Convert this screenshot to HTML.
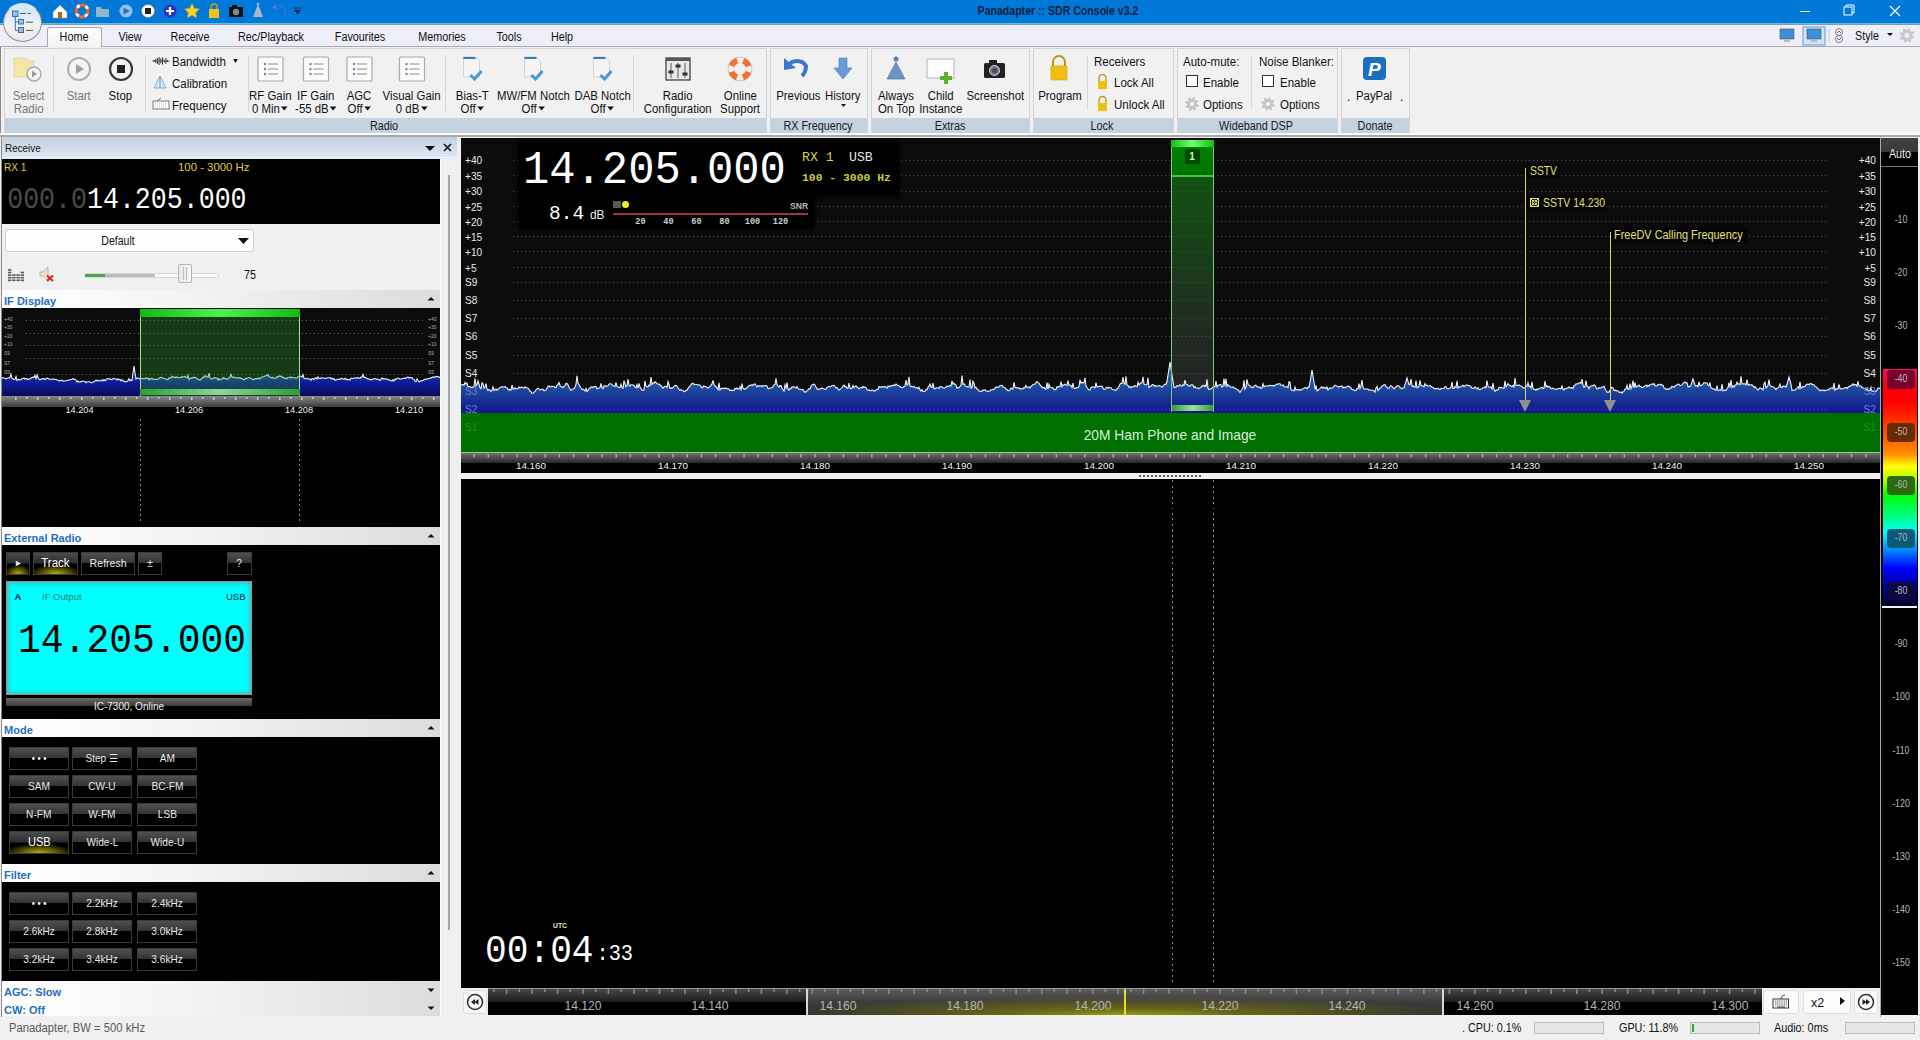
<!DOCTYPE html><html><head><meta charset="utf-8"><title>SDR Console</title><style>
*{margin:0;padding:0;box-sizing:border-box}
html,body{width:1920px;height:1040px;overflow:hidden;background:#f0f0f0;font-family:"Liberation Sans",sans-serif;font-size:12px;color:#000}
.a{position:absolute}
.t{position:absolute;white-space:nowrap;line-height:1}
.m{font-family:"Liberation Mono",monospace}
.hdr{position:absolute;left:2px;width:438px;height:18px;background:linear-gradient(90deg,#ffffff 0%,#f4f4f4 40%,#dcdcdc 100%)}
.hdr b{position:absolute;left:2px;top:5.5px;font-size:11.5px;color:#1f6fc0;white-space:nowrap;line-height:1;transform:scaleX(.96);transform-origin:left}
.btn{position:absolute;height:23px;border:1px solid #3a3a3a;background:linear-gradient(#505050 0%,#333 48%,#000 50%,#000 100%);color:#e8e8e8;font-size:11.5px;text-align:center;line-height:21px;white-space:nowrap}
.btn span{display:inline-block;transform:scaleX(.92)}
.rl{position:absolute;white-space:nowrap;line-height:1;font-size:11.5px;color:#101010;text-align:center}
</style></head><body>
<div class="a" style="left:0px;top:0px;width:1920px;height:23px;background:#0078d7"></div>
<div class="a" style="left:0px;top:23px;width:1920px;height:1px;background:#4cc8f4"></div>
<div class="t" style="left:908.0px;top:5px;width:300px;text-align:center;font-size:12px;font-weight:bold;color:#0b1c44;transform:scaleX(.88)">Panadapter :: SDR Console v3.2</div>
<svg class="a" style="left:1796px;top:0px;" width="124" height="23" viewBox="0 0 124 23"><line x1="4" y1="11.5" x2="14" y2="11.5" stroke="#fff" stroke-width="1"/><rect x="48" y="7" width="8" height="8" fill="none" stroke="#fff"/><path d="M50 7V5h8v8h-2" fill="none" stroke="#fff"/><path d="M94 6L104 16M104 6L94 16" stroke="#fff" stroke-width="1.2"/></svg>
<svg class="a" style="left:0px;top:0px;" width="310" height="23" viewBox="0 0 310 23"><path d="M53 12L60 5L67 12V18H53Z" fill="#fff" stroke="#999" stroke-width=".6"/><rect x="58" y="12" width="4" height="6" fill="#b8601c"/><circle cx="82" cy="11" r="6" fill="none" stroke="#f26a2a" stroke-width="3"/><circle cx="82" cy="11" r="6" fill="none" stroke="#fff" stroke-width="3" stroke-dasharray="3 6.42" stroke-dashoffset="-3.2"/><path d="M96 7h5l1 2h7v8H96Z" fill="#8cb8c8"/><circle cx="126" cy="11" r="6.5" fill="#90c0ea"/><path d="M123.5 7.5L130 11L123.5 14.5Z" fill="#2a6fb8"/><circle cx="148" cy="11" r="6.5" fill="#fff" stroke="#888" stroke-width=".6"/><rect x="145" y="8" width="6" height="6" fill="#222"/><circle cx="170" cy="11" r="6.5" fill="#3030c0"/><path d="M170 7v8M166 11h8" stroke="#fff" stroke-width="2.2"/><path d="M192 3.5l2.3 4.8 5.2.7-3.8 3.6.9 5.2-4.6-2.5-4.6 2.5.9-5.2-3.8-3.6 5.2-.7Z" fill="#f8d030" stroke="#d8a010" stroke-width=".5"/><path d="M211 9V7a3 3 0 0 1 6 0v2" fill="none" stroke="#c8a000" stroke-width="1.5"/><rect x="209" y="9" width="10" height="9" fill="#f0c020"/><rect x="229" y="7" width="14" height="10" fill="#111"/><circle cx="236" cy="12" r="3.2" fill="#888"/><rect x="232" y="5" width="5" height="2" fill="#111"/><path d="M258 4L263 17H253Z" fill="#a8b8cc"/><circle cx="258" cy="4" r="1.5" fill="#9ab"/><path d="M274 9a6 6 0 0 1 11 1v6" fill="none" stroke="#6a6af0" stroke-width="1.3" stroke-dasharray="1.5 1"/><path d="M272 8l3 -3l2 4z" fill="#6a6af0"/><path d="M294 8h7" stroke="#10204a" stroke-width="1"/><path d="M294 10h7l-3.5 4z" fill="#10204a"/></svg>
<div class="a" style="left:0px;top:24px;width:1920px;height:23px;background:#eeeef8"></div>
<div class="a" style="left:0px;top:24px;width:1920px;height:1px;background:#8e96a4"></div>
<div class="a" style="left:0px;top:45.5px;width:1920px;height:1.5px;background:#a9abb3"></div>
<div class="a" style="left:3px;top:3px;width:39px;height:39px;border-radius:50%;background:linear-gradient(rgba(236,248,255,.88) 0%,rgba(240,248,252,.95) 48%,#f2f1ee 52%,#ecebe8 100%);border:1px solid rgba(110,110,110,.75);border-top-color:rgba(200,220,240,.4)"></div>
<svg class="a" style="left:0px;top:0px;" width="44" height="44" viewBox="0 0 44 44"><rect x="12.5" y="11" width="5.5" height="5.5" fill="#9cbde0" stroke="#3d6ea8" stroke-width="1"/><rect x="18.5" y="19.5" width="5" height="4.5" fill="#9cbde0" stroke="#3d6ea8" stroke-width="1"/><rect x="18.5" y="27.5" width="5" height="5" fill="#9cbde0" stroke="#3d6ea8" stroke-width="1"/><path d="M15.3 16.5V30.4H18.5M15.3 22H18.5" fill="none" stroke="#3d6ea8" stroke-width="1"/><path d="M20 13.4h6M27.5 13.4h3.5M26 22.2h7M26 30.4h7" stroke="#555" stroke-width="1"/></svg>
<div class="a" style="left:47px;top:27px;width:55px;height:20px;background:linear-gradient(#fdfdfd,#f2f2f2);border:1px solid #a8a8b0;border-bottom:none;border-radius:3px 3px 0 0"></div>
<div class="t" style="left:14.0px;top:31px;width:120px;text-align:center;font-size:12px;color:#101010;transform:scaleX(.9)">Home</div>
<div class="t" style="left:70.0px;top:31px;width:120px;text-align:center;font-size:12px;color:#101010;transform:scaleX(.9)">View</div>
<div class="t" style="left:129.5px;top:31px;width:120px;text-align:center;font-size:12px;color:#101010;transform:scaleX(.9)">Receive</div>
<div class="t" style="left:210.5px;top:31px;width:120px;text-align:center;font-size:12px;color:#101010;transform:scaleX(.9)">Rec/Playback</div>
<div class="t" style="left:300.0px;top:31px;width:120px;text-align:center;font-size:12px;color:#101010;transform:scaleX(.9)">Favourites</div>
<div class="t" style="left:381.5px;top:31px;width:120px;text-align:center;font-size:12px;color:#101010;transform:scaleX(.9)">Memories</div>
<div class="t" style="left:449.0px;top:31px;width:120px;text-align:center;font-size:12px;color:#101010;transform:scaleX(.9)">Tools</div>
<div class="t" style="left:502.0px;top:31px;width:120px;text-align:center;font-size:12px;color:#101010;transform:scaleX(.9)">Help</div>
<svg class="a" style="left:1776px;top:26px;" width="144" height="20" viewBox="0 0 144 20"><rect x="4" y="3" width="14" height="10" fill="#3d8fd8" stroke="#555" stroke-width=".6"/><rect x="8" y="14" width="6" height="2" fill="#bbb"/><rect x="27" y="1" width="22" height="18" fill="#cfe4f8" stroke="#5b9bd5"/><rect x="31" y="3" width="14" height="10" fill="#3d8fd8" stroke="#555" stroke-width=".6"/><rect x="35" y="14" width="6" height="2" fill="#bbb"/><line x1="53" y1="3" x2="53" y2="17" stroke="#ccc"/><circle cx="63" cy="6" r="3.5" fill="none" stroke="#666" stroke-width=".8"/><circle cx="63" cy="13" r="3.5" fill="none" stroke="#666" stroke-width=".8"/><path d="M61 7l2-2l2 2M61 12l2 2l2-2" fill="none" stroke="#444" stroke-width=".8"/><path d="M111 7h6l-3 3z" fill="#111"/><path d="M136.50 9.50 L138.36 10.96 L137.93 12.37 L135.57 12.56 L134.89 13.39 L135.17 15.74 L133.87 16.43 L132.07 14.89 L131.00 15.00 L129.54 16.86 L128.13 16.43 L127.94 14.07 L127.11 13.39 L124.76 13.67 L124.07 12.37 L125.61 10.57 L125.50 9.50 L123.64 8.04 L124.07 6.63 L126.43 6.44 L127.11 5.61 L126.83 3.26 L128.13 2.57 L129.93 4.11 L131.00 4.00 L132.46 2.14 L133.87 2.57 L134.06 4.93 L134.89 5.61 L137.24 5.33 L137.93 6.63 L136.39 8.43Z" fill="#c8c8c8"/><circle cx="131" cy="9.5" r="2.5" fill="#eeeef8"/></svg>
<div class="t" style="left:1855px;top:30px;font-size:12px;color:#111;transform:scaleX(.9);transform-origin:left">Style</div>
<div class="a" style="left:0px;top:47px;width:1920px;height:90px;background:#f0f0f0"></div>
<div class="a" style="left:0px;top:47px;width:4px;height:90px;background:#f0f0f0;border-left:1px solid #8a8a8a"></div>
<div class="a" style="left:4px;top:48px;width:763px;height:86px;border:1px solid #d4d4d4;background:#f1f1f1"></div>
<div class="a" style="left:5px;top:118px;width:761px;height:15px;background:#c5d2df"></div>
<div class="t" style="left:304.0px;top:120px;width:160px;text-align:center;font-size:12px;color:#1a1a1a;transform:scaleX(.9)">Radio</div>
<div class="a" style="left:770px;top:48px;width:98px;height:86px;border:1px solid #d4d4d4;background:#f1f1f1"></div>
<div class="a" style="left:771px;top:118px;width:96px;height:15px;background:#c5d2df"></div>
<div class="t" style="left:738.0px;top:120px;width:160px;text-align:center;font-size:12px;color:#1a1a1a;transform:scaleX(.9)">RX Frequency</div>
<div class="a" style="left:871px;top:48px;width:159px;height:86px;border:1px solid #d4d4d4;background:#f1f1f1"></div>
<div class="a" style="left:872px;top:118px;width:157px;height:15px;background:#c5d2df"></div>
<div class="t" style="left:870.0px;top:120px;width:160px;text-align:center;font-size:12px;color:#1a1a1a;transform:scaleX(.9)">Extras</div>
<div class="a" style="left:1033px;top:48px;width:141px;height:86px;border:1px solid #d4d4d4;background:#f1f1f1"></div>
<div class="a" style="left:1034px;top:118px;width:139px;height:15px;background:#c5d2df"></div>
<div class="t" style="left:1022.0px;top:120px;width:160px;text-align:center;font-size:12px;color:#1a1a1a;transform:scaleX(.9)">Lock</div>
<div class="a" style="left:1177px;top:48px;width:161px;height:86px;border:1px solid #d4d4d4;background:#f1f1f1"></div>
<div class="a" style="left:1178px;top:118px;width:159px;height:15px;background:#c5d2df"></div>
<div class="t" style="left:1176.0px;top:120px;width:160px;text-align:center;font-size:12px;color:#1a1a1a;transform:scaleX(.9)">Wideband DSP</div>
<div class="a" style="left:1341px;top:48px;width:69px;height:86px;border:1px solid #d4d4d4;background:#f1f1f1"></div>
<div class="a" style="left:1342px;top:118px;width:67px;height:15px;background:#c5d2df"></div>
<div class="t" style="left:1295.0px;top:120px;width:160px;text-align:center;font-size:12px;color:#1a1a1a;transform:scaleX(.9)">Donate</div>
<div class="a" style="left:0px;top:133px;width:1920px;height:2px;background:#fafafa"></div>
<div class="a" style="left:0px;top:135px;width:1920px;height:1.5px;background:#a8a8a8"></div>
<div class="a" style="left:0px;top:136.5px;width:1920px;height:1px;background:#f8f8f8"></div>
<div class="a" style="left:53px;top:55px;width:1px;height:57px;background:#d6d6d6"></div>
<div class="a" style="left:145px;top:55px;width:1px;height:57px;background:#d6d6d6"></div>
<div class="a" style="left:248px;top:55px;width:1px;height:57px;background:#d6d6d6"></div>
<div class="a" style="left:445px;top:55px;width:1px;height:57px;background:#d6d6d6"></div>
<div class="a" style="left:633px;top:55px;width:1px;height:57px;background:#d6d6d6"></div>
<div class="a" style="left:1087px;top:56px;width:1px;height:54px;background:#d8d8d8"></div>
<div class="a" style="left:1251px;top:56px;width:1px;height:54px;background:#d8d8d8"></div>
<div class="t" style="left:-31px;top:90px;width:120px;text-align:center;font-size:12px;color:#777"><span style="display:inline-block;transform:scaleX(.95)">Select</span></div>
<div class="t" style="left:-31px;top:103px;width:120px;text-align:center;font-size:12px;color:#777"><span style="display:inline-block;transform:scaleX(.95)">Radio</span></div>
<div class="t" style="left:19px;top:90px;width:120px;text-align:center;font-size:12px;color:#777"><span style="display:inline-block;transform:scaleX(.95)">Start</span></div>
<div class="t" style="left:60px;top:90px;width:120px;text-align:center;font-size:12px;color:#111"><span style="display:inline-block;transform:scaleX(.95)">Stop</span></div>
<div class="t" style="left:210.5px;top:90px;width:120px;text-align:center;font-size:12px;color:#111"><span style="display:inline-block;transform:scaleX(.95)">RF Gain</span></div>
<div class="t" style="left:210.5px;top:103px;width:120px;text-align:center;font-size:12px;color:#111"><span style="display:inline-block;transform:scaleX(.95)">0 Min<svg width="8" height="5" style="margin-left:1px;vertical-align:2px"><path d="M0.5 0.5h7l-3.5 4z" fill="#111"/></svg></span></div>
<div class="t" style="left:256px;top:90px;width:120px;text-align:center;font-size:12px;color:#111"><span style="display:inline-block;transform:scaleX(.95)">IF Gain</span></div>
<div class="t" style="left:256px;top:103px;width:120px;text-align:center;font-size:12px;color:#111"><span style="display:inline-block;transform:scaleX(.95)">-55 dB<svg width="8" height="5" style="margin-left:1px;vertical-align:2px"><path d="M0.5 0.5h7l-3.5 4z" fill="#111"/></svg></span></div>
<div class="t" style="left:299.5px;top:90px;width:120px;text-align:center;font-size:12px;color:#111"><span style="display:inline-block;transform:scaleX(.95)">AGC</span></div>
<div class="t" style="left:299.5px;top:103px;width:120px;text-align:center;font-size:12px;color:#111"><span style="display:inline-block;transform:scaleX(.95)">Off<svg width="8" height="5" style="margin-left:1px;vertical-align:2px"><path d="M0.5 0.5h7l-3.5 4z" fill="#111"/></svg></span></div>
<div class="t" style="left:352px;top:90px;width:120px;text-align:center;font-size:12px;color:#111"><span style="display:inline-block;transform:scaleX(.95)">Visual Gain</span></div>
<div class="t" style="left:352px;top:103px;width:120px;text-align:center;font-size:12px;color:#111"><span style="display:inline-block;transform:scaleX(.95)">0 dB<svg width="8" height="5" style="margin-left:1px;vertical-align:2px"><path d="M0.5 0.5h7l-3.5 4z" fill="#111"/></svg></span></div>
<div class="t" style="left:412.5px;top:90px;width:120px;text-align:center;font-size:12px;color:#111"><span style="display:inline-block;transform:scaleX(.95)">Bias-T</span></div>
<div class="t" style="left:412.5px;top:103px;width:120px;text-align:center;font-size:12px;color:#111"><span style="display:inline-block;transform:scaleX(.95)">Off<svg width="8" height="5" style="margin-left:1px;vertical-align:2px"><path d="M0.5 0.5h7l-3.5 4z" fill="#111"/></svg></span></div>
<div class="t" style="left:473.5px;top:90px;width:120px;text-align:center;font-size:12px;color:#111"><span style="display:inline-block;transform:scaleX(.95)">MW/FM Notch</span></div>
<div class="t" style="left:473.5px;top:103px;width:120px;text-align:center;font-size:12px;color:#111"><span style="display:inline-block;transform:scaleX(.95)">Off<svg width="8" height="5" style="margin-left:1px;vertical-align:2px"><path d="M0.5 0.5h7l-3.5 4z" fill="#111"/></svg></span></div>
<div class="t" style="left:542.5px;top:90px;width:120px;text-align:center;font-size:12px;color:#111"><span style="display:inline-block;transform:scaleX(.95)">DAB Notch</span></div>
<div class="t" style="left:542.5px;top:103px;width:120px;text-align:center;font-size:12px;color:#111"><span style="display:inline-block;transform:scaleX(.95)">Off<svg width="8" height="5" style="margin-left:1px;vertical-align:2px"><path d="M0.5 0.5h7l-3.5 4z" fill="#111"/></svg></span></div>
<div class="t" style="left:618px;top:90px;width:120px;text-align:center;font-size:12px;color:#111"><span style="display:inline-block;transform:scaleX(.95)">Radio</span></div>
<div class="t" style="left:618px;top:103px;width:120px;text-align:center;font-size:12px;color:#111"><span style="display:inline-block;transform:scaleX(.95)">Configuration</span></div>
<div class="t" style="left:680px;top:90px;width:120px;text-align:center;font-size:12px;color:#111"><span style="display:inline-block;transform:scaleX(.95)">Online</span></div>
<div class="t" style="left:680px;top:103px;width:120px;text-align:center;font-size:12px;color:#111"><span style="display:inline-block;transform:scaleX(.95)">Support</span></div>
<div class="t" style="left:738px;top:90px;width:120px;text-align:center;font-size:12px;color:#111"><span style="display:inline-block;transform:scaleX(.95)">Previous</span></div>
<div class="t" style="left:783px;top:90px;width:120px;text-align:center;font-size:12px;color:#111"><span style="display:inline-block;transform:scaleX(.95)">History</span></div>
<div class="t" style="left:836px;top:90px;width:120px;text-align:center;font-size:12px;color:#111"><span style="display:inline-block;transform:scaleX(.95)">Always</span></div>
<div class="t" style="left:836px;top:103px;width:120px;text-align:center;font-size:12px;color:#111"><span style="display:inline-block;transform:scaleX(.95)">On Top</span></div>
<div class="t" style="left:881px;top:90px;width:120px;text-align:center;font-size:12px;color:#111"><span style="display:inline-block;transform:scaleX(.95)">Child</span></div>
<div class="t" style="left:881px;top:103px;width:120px;text-align:center;font-size:12px;color:#111"><span style="display:inline-block;transform:scaleX(.95)">Instance</span></div>
<div class="t" style="left:935px;top:90px;width:120px;text-align:center;font-size:12px;color:#111"><span style="display:inline-block;transform:scaleX(.95)">Screenshot</span></div>
<div class="t" style="left:1000px;top:90px;width:120px;text-align:center;font-size:12px;color:#111"><span style="display:inline-block;transform:scaleX(.95)">Program</span></div>
<div class="t" style="left:1314.5px;top:90px;width:120px;text-align:center;font-size:12px;color:#111"><span style="display:inline-block;transform:scaleX(.95)">PayPal</span></div>
<div class="t" style="left:1347px;top:91px;font-size:12px">.</div>
<div class="t" style="left:1400px;top:91px;font-size:12px">.</div>
<div class="t" style="left:172px;top:56px;font-size:12px;color:#111"><span style="display:inline-block;transform:scaleX(.96);transform-origin:left">Bandwidth</span></div>
<div class="t" style="left:232px;top:57px;font-size:7px">▼</div>
<div class="t" style="left:172px;top:78px;font-size:12px;color:#111"><span style="display:inline-block;transform:scaleX(.96);transform-origin:left">Calibration</span></div>
<div class="t" style="left:172px;top:100px;font-size:12px;color:#111"><span style="display:inline-block;transform:scaleX(.96);transform-origin:left">Frequency</span></div>
<div class="t" style="left:1094px;top:56px;font-size:12px;color:#111"><span style="display:inline-block;transform:scaleX(.96);transform-origin:left">Receivers</span></div>
<div class="t" style="left:1114px;top:77px;font-size:12px;color:#111"><span style="display:inline-block;transform:scaleX(.96);transform-origin:left">Lock All</span></div>
<div class="t" style="left:1114px;top:99px;font-size:12px;color:#111"><span style="display:inline-block;transform:scaleX(.96);transform-origin:left">Unlock All</span></div>
<div class="t" style="left:1183px;top:56px;font-size:12px;color:#111"><span style="display:inline-block;transform:scaleX(.96);transform-origin:left">Auto-mute:</span></div>
<div class="t" style="left:1203px;top:77px;font-size:12px;color:#111"><span style="display:inline-block;transform:scaleX(.96);transform-origin:left">Enable</span></div>
<div class="t" style="left:1203px;top:99px;font-size:12px;color:#111"><span style="display:inline-block;transform:scaleX(.96);transform-origin:left">Options</span></div>
<div class="t" style="left:1259px;top:56px;font-size:12px;color:#111"><span style="display:inline-block;transform:scaleX(.96);transform-origin:left">Noise Blanker:</span></div>
<div class="t" style="left:1280px;top:77px;font-size:12px;color:#111"><span style="display:inline-block;transform:scaleX(.96);transform-origin:left">Enable</span></div>
<div class="t" style="left:1280px;top:99px;font-size:12px;color:#111"><span style="display:inline-block;transform:scaleX(.96);transform-origin:left">Options</span></div>
<div class="a" style="left:1186px;top:75px;width:12px;height:12px;background:#fff;border:1px solid #333"></div>
<div class="a" style="left:1262px;top:75px;width:12px;height:12px;background:#fff;border:1px solid #333"></div>
<svg class="a" style="left:0px;top:0px;" width="1420" height="137" viewBox="0 0 1420 137"><path d="M14 58h12l2 3h6v16H14Z" fill="#f4e6a8" stroke="#d8c888" stroke-width=".6"/><circle cx="34" cy="74" r="7" fill="#f4f4f4" stroke="#aaa" stroke-width="1.5"/><path d="M32 70.5L37 74L32 77.5Z" fill="#999"/><circle cx="79" cy="69" r="11" fill="#f4f4f4" stroke="#b0b0b0" stroke-width="2"/><path d="M76 64L84 69L76 74Z" fill="#a0a0a0"/><circle cx="121" cy="69" r="11" fill="#f4f4f4" stroke="#3a3a3a" stroke-width="2.2"/><rect x="117" y="65" width="8" height="8" fill="#222"/><line x1="154.0" y1="60.0" x2="154.0" y2="62.0" stroke="#333" stroke-width="1"/><line x1="155.7" y1="59.0" x2="155.7" y2="63.0" stroke="#333" stroke-width="1"/><line x1="157.4" y1="58.0" x2="157.4" y2="64.0" stroke="#333" stroke-width="1"/><line x1="159.1" y1="57.0" x2="159.1" y2="65.0" stroke="#333" stroke-width="1"/><line x1="160.8" y1="58.5" x2="160.8" y2="63.5" stroke="#333" stroke-width="1"/><line x1="162.5" y1="57.5" x2="162.5" y2="64.5" stroke="#333" stroke-width="1"/><line x1="164.2" y1="59.5" x2="164.2" y2="62.5" stroke="#333" stroke-width="1"/><line x1="165.9" y1="58.0" x2="165.9" y2="64.0" stroke="#333" stroke-width="1"/><line x1="167.6" y1="60.0" x2="167.6" y2="62.0" stroke="#333" stroke-width="1"/><line x1="152" y1="61" x2="170" y2="61" stroke="#333" stroke-width=".6"/><path d="M154 88L160 76L166 88Z" fill="#d8ecf8" stroke="#6a9ac8" stroke-width=".8"/><line x1="160" y1="76" x2="160" y2="88" stroke="#6a9ac8"/><rect x="153" y="101" width="16" height="8" fill="#fff" stroke="#555" stroke-width=".8"/><path d="M155 103h12M155 105h12M155 107h12" stroke="#888" stroke-width=".6" stroke-dasharray="1 1"/><path d="M157 101l4-3" stroke="#555" stroke-width=".8"/><rect x="258.0" y="57" width="25" height="24" fill="#fbfbfb" stroke="#a8a8a8" stroke-width="1.2" rx="1"/><circle cx="265.0" cy="64" r="1.2" fill="#6a8ab0"/><line x1="268.0" y1="64" x2="278.0" y2="64" stroke="#8a8a8a" stroke-width="1"/><circle cx="265.0" cy="69" r="1.2" fill="#6a8ab0"/><line x1="268.0" y1="69" x2="278.0" y2="69" stroke="#8a8a8a" stroke-width="1"/><circle cx="265.0" cy="74" r="1.2" fill="#6a8ab0"/><line x1="268.0" y1="74" x2="278.0" y2="74" stroke="#8a8a8a" stroke-width="1"/><rect x="303.5" y="57" width="25" height="24" fill="#fbfbfb" stroke="#a8a8a8" stroke-width="1.2" rx="1"/><circle cx="310.5" cy="64" r="1.2" fill="#6a8ab0"/><line x1="313.5" y1="64" x2="323.5" y2="64" stroke="#8a8a8a" stroke-width="1"/><circle cx="310.5" cy="69" r="1.2" fill="#6a8ab0"/><line x1="313.5" y1="69" x2="323.5" y2="69" stroke="#8a8a8a" stroke-width="1"/><circle cx="310.5" cy="74" r="1.2" fill="#6a8ab0"/><line x1="313.5" y1="74" x2="323.5" y2="74" stroke="#8a8a8a" stroke-width="1"/><rect x="347.0" y="57" width="25" height="24" fill="#fbfbfb" stroke="#a8a8a8" stroke-width="1.2" rx="1"/><circle cx="354.0" cy="64" r="1.2" fill="#6a8ab0"/><line x1="357.0" y1="64" x2="367.0" y2="64" stroke="#8a8a8a" stroke-width="1"/><circle cx="354.0" cy="69" r="1.2" fill="#6a8ab0"/><line x1="357.0" y1="69" x2="367.0" y2="69" stroke="#8a8a8a" stroke-width="1"/><circle cx="354.0" cy="74" r="1.2" fill="#6a8ab0"/><line x1="357.0" y1="74" x2="367.0" y2="74" stroke="#8a8a8a" stroke-width="1"/><rect x="399.5" y="57" width="25" height="24" fill="#fbfbfb" stroke="#a8a8a8" stroke-width="1.2" rx="1"/><circle cx="406.5" cy="64" r="1.2" fill="#6a8ab0"/><line x1="409.5" y1="64" x2="419.5" y2="64" stroke="#8a8a8a" stroke-width="1"/><circle cx="406.5" cy="69" r="1.2" fill="#6a8ab0"/><line x1="409.5" y1="69" x2="419.5" y2="69" stroke="#8a8a8a" stroke-width="1"/><circle cx="406.5" cy="74" r="1.2" fill="#6a8ab0"/><line x1="409.5" y1="74" x2="419.5" y2="74" stroke="#8a8a8a" stroke-width="1"/><path d="M463.5 57h12l4 4v16H463.5Z" fill="#f4f4f4" stroke="#c8c8c8" stroke-width=".8"/><rect x="463.5" y="57" width="12" height="2" fill="#3a7ac0"/><path d="M470.5 75l4 4l7-8" fill="none" stroke="#4a9ad8" stroke-width="3"/><path d="M524.5 57h12l4 4v16H524.5Z" fill="#f4f4f4" stroke="#c8c8c8" stroke-width=".8"/><rect x="524.5" y="57" width="12" height="2" fill="#3a7ac0"/><path d="M531.5 75l4 4l7-8" fill="none" stroke="#4a9ad8" stroke-width="3"/><path d="M593.5 57h12l4 4v16H593.5Z" fill="#f4f4f4" stroke="#c8c8c8" stroke-width=".8"/><rect x="593.5" y="57" width="12" height="2" fill="#3a7ac0"/><path d="M600.5 75l4 4l7-8" fill="none" stroke="#4a9ad8" stroke-width="3"/><rect x="666" y="58" width="24" height="22" fill="#e8e8e8" stroke="#333" stroke-width="1.2"/><rect x="666" y="58" width="24" height="3" fill="#555"/><line x1="671" y1="63" x2="671" y2="78" stroke="#333" stroke-width=".8"/><rect x="668.5" y="70.5" width="5" height="3" fill="#333"/><line x1="678" y1="63" x2="678" y2="78" stroke="#333" stroke-width=".8"/><rect x="675.5" y="64.5" width="5" height="3" fill="#333"/><line x1="685" y1="63" x2="685" y2="78" stroke="#333" stroke-width=".8"/><rect x="682.5" y="72.5" width="5" height="3" fill="#333"/><circle cx="740" cy="69" r="9" fill="none" stroke="#f07030" stroke-width="6"/><circle cx="740" cy="69" r="9" fill="none" stroke="#f0f0f0" stroke-width="6" stroke-dasharray="6.1 8" stroke-dashoffset="3"/><circle cx="740" cy="69" r="12" fill="none" stroke="#bbb" stroke-width=".6"/><path d="M788 66a10 9 0 0 1 18 0c0 5 -2 8 -4 10" fill="none" stroke="#3a78d0" stroke-width="4"/><path d="M784 58L784 70L796 68Z" fill="#3a78d0"/><path d="M839 58h8v10h5L843 79L834 68h5Z" fill="#6a9ad8" stroke="#4a7ab8" stroke-width=".6"/><path d="M841 104h5l-2.5 3z" fill="#111"/><circle cx="896" cy="59" r="2.5" fill="#5a80b0"/><path d="M896 62L905 79H887Z" fill="#6c94c4" stroke="#4a6a98" stroke-width=".6"/><rect x="927" y="59" width="27" height="19" fill="#fdfdfd" stroke="#c8c8c8" stroke-width="1.4"/><path d="M946 72v12M940 78h12" stroke="#5ab030" stroke-width="4"/><rect x="984" y="63" width="21" height="15" fill="#222" rx="1.5"/><rect x="989" y="60" width="8" height="4" fill="#222"/><circle cx="994.5" cy="70.5" r="5" fill="#777" stroke="#ddd" stroke-width="1"/><circle cx="994.5" cy="70.5" r="2.5" fill="#446"/><path d="M1053 66v-4a6 6 0 0 1 12 0v4" fill="none" stroke="#b89818" stroke-width="2"/><rect x="1051" y="66" width="16" height="14" fill="#f0c010" stroke="#d0a008" stroke-width=".6"/><path d="M1099 81v-3a3.5 3.5 0 0 1 7 0v3" fill="none" stroke="#b89818" stroke-width="1.4"/><rect x="1098" y="81" width="9" height="8" fill="#f0c010"/><path d="M1099 103v-3a3.5 3.5 0 0 1 7 0v3" fill="none" stroke="#b89818" stroke-width="1.4"/><rect x="1098" y="103" width="9" height="8" fill="#f0c010"/><path d="M1197.00 104.00 L1198.87 105.37 L1198.47 106.68 L1196.16 106.78 L1195.54 107.54 L1195.89 109.82 L1194.68 110.47 L1192.98 108.90 L1192.00 109.00 L1190.63 110.87 L1189.32 110.47 L1189.22 108.16 L1188.46 107.54 L1186.18 107.89 L1185.53 106.68 L1187.10 104.98 L1187.00 104.00 L1185.13 102.63 L1185.53 101.32 L1187.84 101.22 L1188.46 100.46 L1188.11 98.18 L1189.32 97.53 L1191.02 99.10 L1192.00 99.00 L1193.37 97.13 L1194.68 97.53 L1194.78 99.84 L1195.54 100.46 L1197.82 100.11 L1198.47 101.32 L1196.90 103.02Z" fill="#c4c4c4"/><circle cx="1192" cy="104" r="2.3" fill="#f0f0f0"/><path d="M1273.00 104.00 L1274.87 105.37 L1274.47 106.68 L1272.16 106.78 L1271.54 107.54 L1271.89 109.82 L1270.68 110.47 L1268.98 108.90 L1268.00 109.00 L1266.63 110.87 L1265.32 110.47 L1265.22 108.16 L1264.46 107.54 L1262.18 107.89 L1261.53 106.68 L1263.10 104.98 L1263.00 104.00 L1261.13 102.63 L1261.53 101.32 L1263.84 101.22 L1264.46 100.46 L1264.11 98.18 L1265.32 97.53 L1267.02 99.10 L1268.00 99.00 L1269.37 97.13 L1270.68 97.53 L1270.78 99.84 L1271.54 100.46 L1273.82 100.11 L1274.47 101.32 L1272.90 103.02Z" fill="#c4c4c4"/><circle cx="1268" cy="104" r="2.3" fill="#f0f0f0"/><rect x="1363" y="57" width="23" height="23" rx="4" fill="#1a6fc0"/><text x="1368" y="76" font-family="Liberation Sans" font-weight="bold" font-style="italic" font-size="19" fill="#fff">P</text></svg>
<div class="a" style="left:0px;top:1016px;width:1920px;height:24px;background:#f0f0f0;border-top:1px solid #d8d8d8"></div>
<div class="t" style="left:9px;top:1022px;font-size:12.5px;color:#5a5a5a"><span style="display:inline-block;transform:scaleX(.9);transform-origin:left">Panadapter, BW = 500 kHz</span></div>
<div class="t" style="left:1462px;top:1022px;font-size:12px;color:#111"><span style="display:inline-block;transform:scaleX(.9);transform-origin:left">. CPU: 0.1%</span></div>
<div class="a" style="left:1534px;top:1022px;width:70px;height:12px;background:#e6e6e6;border:1px solid #bcbcbc"></div>
<div class="t" style="left:1619px;top:1022px;font-size:12px;color:#111"><span style="display:inline-block;transform:scaleX(.9);transform-origin:left">GPU: 11.8%</span></div>
<div class="a" style="left:1690px;top:1022px;width:70px;height:12px;background:#e6e6e6;border:1px solid #bcbcbc"></div>
<div class="a" style="left:1692px;top:1024px;width:2px;height:8px;background:#22b030"></div>
<div class="t" style="left:1774px;top:1022px;font-size:12px;color:#111"><span style="display:inline-block;transform:scaleX(.9);transform-origin:left">Audio: 0ms</span></div>
<div class="a" style="left:1845px;top:1022px;width:70px;height:12px;background:#e6e6e6;border:1px solid #bcbcbc"></div>
<div class="a" style="left:0px;top:137px;width:461px;height:880px;background:#f0f0f0"></div>
<div class="a" style="left:1px;top:137px;width:1px;height:880px;background:#8c8c8c"></div>
<div class="a" style="left:440px;top:137px;width:1px;height:880px;background:#fafafa"></div>
<div class="a" style="left:448px;top:175px;width:2px;height:755px;background:#a6a6a6"></div>
<div class="a" style="left:2px;top:137px;width:455px;height:22px;background:linear-gradient(#c3d0df,#d6e2ee 70%,#dfe9f4)"></div>
<div class="a" style="left:2px;top:157px;width:455px;height:1px;background:#f4f8fc"></div>
<div class="t" style="left:4.5px;top:143px;font-size:11.5px;color:#111"><span style="display:inline-block;transform:scaleX(.86);transform-origin:left">Receive</span></div>
<svg class="a" style="left:422px;top:140px;" width="34" height="16" viewBox="0 0 34 16"><path d="M3 6h10l-5 5z" fill="#111"/><path d="M22 4l7 7M29 4l-7 7" stroke="#111" stroke-width="1.6"/></svg>
<div class="a" style="left:2px;top:159px;width:438px;height:65px;background:#000"></div>
<div class="t" style="left:3.5px;top:161.5px;font-size:11.5px;color:#e0c840"><span style="display:inline-block;transform:scaleX(.88);transform-origin:left">RX 1</span></div>
<div class="t" style="left:178px;top:161.5px;font-size:11.5px;color:#e0c840"><span style="display:inline-block;transform:scaleX(.99);transform-origin:left">100 - 3000 Hz</span></div>
<div class="t m" style="left:7.2px;top:186px;font-size:26.6px;transform:scaleY(1.08);transform-origin:top"><span style="color:#4a4a4a">000.0</span><span style="color:#fff">14.205.000</span></div>
<div class="a" style="left:5px;top:229px;width:249px;height:23px;background:#fdfdfd;border:1px solid #cfcfcf;border-radius:3px"></div>
<div class="t" style="left:58.0px;top:235px;width:120px;text-align:center;font-size:12px;color:#111"><span style="display:inline-block;transform:scaleX(.88)">Default</span></div>
<svg class="a" style="left:237px;top:236px;" width="14" height="10" viewBox="0 0 14 10"><path d="M1 2h11l-5.5 6z" fill="#111"/></svg>
<svg class="a" style="left:0px;top:260px;" width="260" height="30" viewBox="0 0 260 30"><rect x="8.0" y="19.5" width="3.4" height="1.6" fill="#5a5a5a"/><rect x="8.0" y="16.9" width="3.4" height="1.6" fill="#5a5a5a"/><rect x="8.0" y="14.3" width="3.4" height="1.6" fill="#5a5a5a"/><rect x="8.0" y="11.7" width="3.4" height="1.6" fill="#5a5a5a"/><rect x="8.0" y="9.1" width="3.4" height="1.6" fill="#5a5a5a"/><rect x="12.2" y="19.5" width="3.4" height="1.6" fill="#5a5a5a"/><rect x="12.2" y="16.9" width="3.4" height="1.6" fill="#5a5a5a"/><rect x="12.2" y="14.3" width="3.4" height="1.6" fill="#5a5a5a"/><rect x="16.4" y="19.5" width="3.4" height="1.6" fill="#5a5a5a"/><rect x="16.4" y="16.9" width="3.4" height="1.6" fill="#5a5a5a"/><rect x="16.4" y="14.3" width="3.4" height="1.6" fill="#5a5a5a"/><rect x="20.6" y="19.5" width="3.4" height="1.6" fill="#5a5a5a"/><rect x="20.6" y="16.9" width="3.4" height="1.6" fill="#5a5a5a"/><rect x="20.6" y="14.3" width="3.4" height="1.6" fill="#5a5a5a"/><rect x="20.6" y="11.7" width="3.4" height="1.6" fill="#5a5a5a"/><path d="M40 12h3l5-5v14l-5-5h-3z" fill="#ece4c8" stroke="#a0a0a0" stroke-width=".7"/><path d="M47 15.5l6 5.5M53 15.5l-6 5.5" stroke="#e02020" stroke-width="2"/></svg>
<div class="a" style="left:84px;top:273px;width:135px;height:5px;border-radius:3px;background:#fbfbfb;border:1px solid #d8d8d8"></div>
<div class="a" style="left:85px;top:274px;width:70px;height:3px;background:#bdbdbd"></div>
<div class="a" style="left:85px;top:274px;width:20px;height:3px;background:#3fae48"></div>
<div class="a" style="left:178px;top:264px;width:14px;height:19px;border-radius:2px;background:linear-gradient(90deg,#e8e8e8,#f8f8f8);border:1px solid #b4b4b4"></div>
<div class="a" style="left:183px;top:267px;width:1px;height:13px;background:#bbb"></div>
<div class="a" style="left:186px;top:267px;width:1px;height:13px;background:#bbb"></div>
<div class="t" style="left:243.5px;top:269px;font-size:12px;color:#111"><span style="display:inline-block;transform:scaleX(.9);transform-origin:left">75</span></div>
<div class="hdr" style="top:290px;height:18px"><b>IF Display</b></div>
<svg class="a" style="left:426px;top:296px;" width="10" height="6" viewBox="0 0 10 6"><path d="M1.5 4.5h7L5 1z" fill="#111"/></svg>
<div class="a" style="left:2px;top:308px;width:438px;height:219px;background:#000"></div>
<div class="a" style="left:2px;top:308px;width:438px;height:88px;background:#0c0c0c"></div>
<div class="a" style="left:26px;top:320px;width:400px;height:1px;background:repeating-linear-gradient(90deg,#6a6a6a 0 1px,transparent 1px 4px)"></div>
<div class="a" style="left:26px;top:332.5px;width:400px;height:1px;background:repeating-linear-gradient(90deg,#6a6a6a 0 1px,transparent 1px 4px)"></div>
<div class="a" style="left:26px;top:344.5px;width:400px;height:1px;background:repeating-linear-gradient(90deg,#6a6a6a 0 1px,transparent 1px 4px)"></div>
<div class="a" style="left:26px;top:358px;width:400px;height:1px;background:repeating-linear-gradient(90deg,#6a6a6a 0 1px,transparent 1px 4px)"></div>
<div class="a" style="left:26px;top:373.5px;width:400px;height:1px;background:repeating-linear-gradient(90deg,#6a6a6a 0 1px,transparent 1px 4px)"></div>
<div class="a" style="left:26px;top:387.5px;width:400px;height:1px;background:repeating-linear-gradient(90deg,#6a6a6a 0 1px,transparent 1px 4px)"></div>
<div class="t" style="left:4px;top:317px;font-size:5px;color:#aaa">+40</div>
<div class="t" style="left:428px;top:317px;font-size:5px;color:#aaa">+40</div>
<div class="t" style="left:4px;top:325px;font-size:5px;color:#aaa">+30</div>
<div class="t" style="left:428px;top:325px;font-size:5px;color:#aaa">+30</div>
<div class="t" style="left:4px;top:334px;font-size:5px;color:#aaa">+20</div>
<div class="t" style="left:428px;top:334px;font-size:5px;color:#aaa">+20</div>
<div class="t" style="left:4px;top:342px;font-size:5px;color:#aaa">+10</div>
<div class="t" style="left:428px;top:342px;font-size:5px;color:#aaa">+10</div>
<div class="t" style="left:4px;top:351px;font-size:5px;color:#aaa">S9</div>
<div class="t" style="left:428px;top:351px;font-size:5px;color:#aaa">S9</div>
<div class="t" style="left:4px;top:361px;font-size:5px;color:#aaa">S7</div>
<div class="t" style="left:428px;top:361px;font-size:5px;color:#aaa">S7</div>
<div class="t" style="left:4px;top:370px;font-size:5px;color:#aaa">S5</div>
<div class="t" style="left:428px;top:370px;font-size:5px;color:#aaa">S5</div>
<div class="t" style="left:4px;top:392px;font-size:5px;color:#aaa">S1</div>
<div class="t" style="left:428px;top:392px;font-size:5px;color:#aaa">S1</div>
<svg class="a" style="left:0px;top:300px;overflow:visible" width="450" height="110" viewBox="0 0 450 110"><defs><linearGradient id="ifb" x1="0" y1="0" x2="0" y2="1"><stop offset="0" stop-color="#1d5cb0"/><stop offset=".55" stop-color="#0d1c98"/><stop offset="1" stop-color="#0a0a5a"/></linearGradient></defs><path d="M2 396 L2 378.2 L3 377.6 L4 378.0 L5 378.2 L6 378.8 L7 378.2 L8 378.0 L9 377.9 L10 377.5 L11 374.2 L12 378.3 L13 378.7 L14 379.5 L15 379.5 L16 376.6 L17 380.5 L18 379.5 L19 379.4 L20 380.1 L21 379.4 L22 378.5 L23 378.7 L24 377.8 L25 379.2 L26 378.5 L27 378.6 L28 379.6 L29 379.2 L30 378.9 L31 378.2 L32 377.6 L33 377.2 L34 377.6 L35 375.5 L36 378.6 L37 375.0 L38 377.4 L39 379.1 L40 379.8 L41 379.1 L42 379.2 L43 378.4 L44 378.8 L45 379.5 L46 378.8 L47 378.0 L48 378.3 L49 379.0 L50 379.4 L51 379.0 L52 379.4 L53 378.8 L54 379.5 L55 379.3 L56 379.4 L57 380.0 L58 380.3 L59 380.6 L60 380.9 L61 380.2 L62 380.1 L63 381.2 L64 380.9 L65 381.0 L66 380.7 L67 380.5 L68 380.1 L69 380.2 L70 379.8 L71 379.5 L72 379.2 L73 378.4 L74 379.5 L75 379.3 L76 380.1 L77 382.0 L78 381.1 L79 382.0 L80 382.1 L81 381.3 L82 381.6 L83 381.0 L84 381.2 L85 381.4 L86 382.8 L87 381.7 L88 381.7 L89 381.8 L90 381.9 L91 382.8 L92 382.8 L93 381.8 L94 382.0 L95 381.2 L96 380.0 L97 381.0 L98 380.2 L99 380.7 L100 381.2 L101 380.2 L102 379.9 L103 381.0 L104 379.5 L105 380.8 L106 380.0 L107 378.5 L108 378.7 L109 378.9 L110 378.9 L111 379.6 L112 379.5 L113 378.7 L114 378.7 L115 378.6 L116 379.1 L117 379.9 L118 378.8 L119 379.7 L120 379.4 L121 380.8 L122 379.8 L123 380.5 L124 381.5 L125 381.6 L126 382.0 L127 381.6 L128 380.6 L129 378.7 L130 380.8 L131 380.0 L132 380.4 L133 373.0 L134 366.0 L135 373.0 L136 378.9 L137 378.1 L138 378.1 L139 378.4 L140 378.9 L141 378.6 L142 378.3 L143 378.7 L144 378.5 L145 378.7 L146 377.8 L147 378.4 L148 378.2 L149 379.9 L150 378.4 L151 379.0 L152 378.3 L153 379.2 L154 379.4 L155 379.2 L156 379.6 L157 379.2 L158 379.1 L159 378.3 L160 377.6 L161 377.3 L162 377.9 L163 378.2 L164 378.5 L165 378.8 L166 378.8 L167 379.7 L168 379.7 L169 377.9 L170 377.9 L171 378.1 L172 376.2 L173 377.2 L174 376.9 L175 377.8 L176 376.9 L177 377.1 L178 377.7 L179 377.5 L180 377.5 L181 377.7 L182 376.5 L183 377.0 L184 377.0 L185 376.2 L186 377.4 L187 377.9 L188 375.2 L189 379.5 L190 378.3 L191 378.5 L192 377.6 L193 377.9 L194 377.2 L195 377.6 L196 377.6 L197 379.0 L198 379.0 L199 379.9 L200 380.1 L201 379.3 L202 378.5 L203 377.2 L204 377.5 L205 375.4 L206 376.6 L207 377.0 L208 377.1 L209 373.1 L210 378.0 L211 378.8 L212 379.1 L213 378.1 L214 378.1 L215 377.9 L216 377.8 L217 378.0 L218 379.9 L219 378.7 L220 379.9 L221 379.6 L222 379.0 L223 377.4 L224 378.6 L225 378.2 L226 378.7 L227 379.4 L228 379.0 L229 377.7 L230 377.0 L231 374.3 L232 377.2 L233 377.4 L234 376.9 L235 377.8 L236 377.6 L237 378.0 L238 377.9 L239 378.1 L240 377.4 L241 378.7 L242 378.3 L243 379.5 L244 379.8 L245 379.0 L246 378.2 L247 378.5 L248 378.1 L249 377.6 L250 378.0 L251 378.0 L252 379.0 L253 379.6 L254 379.7 L255 378.5 L256 378.6 L257 379.0 L258 378.1 L259 378.1 L260 378.9 L261 377.7 L262 377.0 L263 377.0 L264 376.5 L265 376.0 L266 375.7 L267 375.4 L268 374.6 L269 376.3 L270 377.0 L271 377.5 L272 378.0 L273 377.3 L274 378.3 L275 378.3 L276 378.3 L277 376.6 L278 376.8 L279 376.2 L280 375.6 L281 376.6 L282 376.5 L283 377.9 L284 377.5 L285 378.6 L286 378.2 L287 378.7 L288 377.3 L289 377.3 L290 377.9 L291 376.8 L292 377.8 L293 377.8 L294 377.6 L295 377.7 L296 378.2 L297 378.1 L298 376.8 L299 376.5 L300 375.8 L301 376.4 L302 376.9 L303 374.7 L304 378.2 L305 378.8 L306 378.9 L307 378.1 L308 378.6 L309 379.4 L310 379.0 L311 380.4 L312 378.6 L313 378.5 L314 379.6 L315 378.5 L316 377.6 L317 379.0 L318 376.9 L319 378.3 L320 378.6 L321 377.8 L322 377.7 L323 378.2 L324 378.0 L325 378.2 L326 378.4 L327 378.0 L328 377.7 L329 377.7 L330 377.6 L331 378.7 L332 378.1 L333 379.3 L334 378.6 L335 380.3 L336 380.1 L337 379.2 L338 379.2 L339 379.1 L340 379.4 L341 378.5 L342 378.3 L343 378.9 L344 379.4 L345 378.3 L346 379.6 L347 379.2 L348 379.8 L349 379.5 L350 380.0 L351 378.1 L352 378.5 L353 378.4 L354 378.0 L355 378.0 L356 377.9 L357 378.4 L358 377.4 L359 378.0 L360 378.3 L361 377.1 L362 376.9 L363 374.5 L364 377.6 L365 377.2 L366 377.9 L367 378.7 L368 378.5 L369 379.1 L370 379.8 L371 379.4 L372 379.9 L373 378.9 L374 378.7 L375 378.6 L376 379.1 L377 379.1 L378 379.2 L379 379.7 L380 380.5 L381 379.4 L382 377.9 L383 379.1 L384 378.7 L385 379.0 L386 379.1 L387 379.1 L388 379.5 L389 380.1 L390 380.2 L391 380.8 L392 381.1 L393 379.7 L394 380.9 L395 379.0 L396 379.5 L397 378.6 L398 377.9 L399 378.6 L400 379.1 L401 379.0 L402 378.7 L403 378.5 L404 378.4 L405 377.9 L406 378.3 L407 377.4 L408 376.9 L409 378.0 L410 377.5 L411 377.6 L412 377.8 L413 379.3 L414 379.3 L415 381.1 L416 381.7 L417 378.9 L418 380.2 L419 381.9 L420 381.6 L421 380.8 L422 380.6 L423 380.5 L424 379.7 L425 379.1 L426 379.6 L427 378.9 L428 378.5 L429 378.8 L430 378.5 L431 377.6 L432 377.6 L433 376.9 L434 377.1 L435 377.1 L436 376.4 L437 376.8 L438 376.5 L439 377.0 L440 377.8 L440 396Z" fill="url(#ifb)" transform="translate(0,-300)"/><path d="M2 378.2 L3 377.6 L4 378.0 L5 378.2 L6 378.8 L7 378.2 L8 378.0 L9 377.9 L10 377.5 L11 374.2 L12 378.3 L13 378.7 L14 379.5 L15 379.5 L16 376.6 L17 380.5 L18 379.5 L19 379.4 L20 380.1 L21 379.4 L22 378.5 L23 378.7 L24 377.8 L25 379.2 L26 378.5 L27 378.6 L28 379.6 L29 379.2 L30 378.9 L31 378.2 L32 377.6 L33 377.2 L34 377.6 L35 375.5 L36 378.6 L37 375.0 L38 377.4 L39 379.1 L40 379.8 L41 379.1 L42 379.2 L43 378.4 L44 378.8 L45 379.5 L46 378.8 L47 378.0 L48 378.3 L49 379.0 L50 379.4 L51 379.0 L52 379.4 L53 378.8 L54 379.5 L55 379.3 L56 379.4 L57 380.0 L58 380.3 L59 380.6 L60 380.9 L61 380.2 L62 380.1 L63 381.2 L64 380.9 L65 381.0 L66 380.7 L67 380.5 L68 380.1 L69 380.2 L70 379.8 L71 379.5 L72 379.2 L73 378.4 L74 379.5 L75 379.3 L76 380.1 L77 382.0 L78 381.1 L79 382.0 L80 382.1 L81 381.3 L82 381.6 L83 381.0 L84 381.2 L85 381.4 L86 382.8 L87 381.7 L88 381.7 L89 381.8 L90 381.9 L91 382.8 L92 382.8 L93 381.8 L94 382.0 L95 381.2 L96 380.0 L97 381.0 L98 380.2 L99 380.7 L100 381.2 L101 380.2 L102 379.9 L103 381.0 L104 379.5 L105 380.8 L106 380.0 L107 378.5 L108 378.7 L109 378.9 L110 378.9 L111 379.6 L112 379.5 L113 378.7 L114 378.7 L115 378.6 L116 379.1 L117 379.9 L118 378.8 L119 379.7 L120 379.4 L121 380.8 L122 379.8 L123 380.5 L124 381.5 L125 381.6 L126 382.0 L127 381.6 L128 380.6 L129 378.7 L130 380.8 L131 380.0 L132 380.4 L133 373.0 L134 366.0 L135 373.0 L136 378.9 L137 378.1 L138 378.1 L139 378.4 L140 378.9 L141 378.6 L142 378.3 L143 378.7 L144 378.5 L145 378.7 L146 377.8 L147 378.4 L148 378.2 L149 379.9 L150 378.4 L151 379.0 L152 378.3 L153 379.2 L154 379.4 L155 379.2 L156 379.6 L157 379.2 L158 379.1 L159 378.3 L160 377.6 L161 377.3 L162 377.9 L163 378.2 L164 378.5 L165 378.8 L166 378.8 L167 379.7 L168 379.7 L169 377.9 L170 377.9 L171 378.1 L172 376.2 L173 377.2 L174 376.9 L175 377.8 L176 376.9 L177 377.1 L178 377.7 L179 377.5 L180 377.5 L181 377.7 L182 376.5 L183 377.0 L184 377.0 L185 376.2 L186 377.4 L187 377.9 L188 375.2 L189 379.5 L190 378.3 L191 378.5 L192 377.6 L193 377.9 L194 377.2 L195 377.6 L196 377.6 L197 379.0 L198 379.0 L199 379.9 L200 380.1 L201 379.3 L202 378.5 L203 377.2 L204 377.5 L205 375.4 L206 376.6 L207 377.0 L208 377.1 L209 373.1 L210 378.0 L211 378.8 L212 379.1 L213 378.1 L214 378.1 L215 377.9 L216 377.8 L217 378.0 L218 379.9 L219 378.7 L220 379.9 L221 379.6 L222 379.0 L223 377.4 L224 378.6 L225 378.2 L226 378.7 L227 379.4 L228 379.0 L229 377.7 L230 377.0 L231 374.3 L232 377.2 L233 377.4 L234 376.9 L235 377.8 L236 377.6 L237 378.0 L238 377.9 L239 378.1 L240 377.4 L241 378.7 L242 378.3 L243 379.5 L244 379.8 L245 379.0 L246 378.2 L247 378.5 L248 378.1 L249 377.6 L250 378.0 L251 378.0 L252 379.0 L253 379.6 L254 379.7 L255 378.5 L256 378.6 L257 379.0 L258 378.1 L259 378.1 L260 378.9 L261 377.7 L262 377.0 L263 377.0 L264 376.5 L265 376.0 L266 375.7 L267 375.4 L268 374.6 L269 376.3 L270 377.0 L271 377.5 L272 378.0 L273 377.3 L274 378.3 L275 378.3 L276 378.3 L277 376.6 L278 376.8 L279 376.2 L280 375.6 L281 376.6 L282 376.5 L283 377.9 L284 377.5 L285 378.6 L286 378.2 L287 378.7 L288 377.3 L289 377.3 L290 377.9 L291 376.8 L292 377.8 L293 377.8 L294 377.6 L295 377.7 L296 378.2 L297 378.1 L298 376.8 L299 376.5 L300 375.8 L301 376.4 L302 376.9 L303 374.7 L304 378.2 L305 378.8 L306 378.9 L307 378.1 L308 378.6 L309 379.4 L310 379.0 L311 380.4 L312 378.6 L313 378.5 L314 379.6 L315 378.5 L316 377.6 L317 379.0 L318 376.9 L319 378.3 L320 378.6 L321 377.8 L322 377.7 L323 378.2 L324 378.0 L325 378.2 L326 378.4 L327 378.0 L328 377.7 L329 377.7 L330 377.6 L331 378.7 L332 378.1 L333 379.3 L334 378.6 L335 380.3 L336 380.1 L337 379.2 L338 379.2 L339 379.1 L340 379.4 L341 378.5 L342 378.3 L343 378.9 L344 379.4 L345 378.3 L346 379.6 L347 379.2 L348 379.8 L349 379.5 L350 380.0 L351 378.1 L352 378.5 L353 378.4 L354 378.0 L355 378.0 L356 377.9 L357 378.4 L358 377.4 L359 378.0 L360 378.3 L361 377.1 L362 376.9 L363 374.5 L364 377.6 L365 377.2 L366 377.9 L367 378.7 L368 378.5 L369 379.1 L370 379.8 L371 379.4 L372 379.9 L373 378.9 L374 378.7 L375 378.6 L376 379.1 L377 379.1 L378 379.2 L379 379.7 L380 380.5 L381 379.4 L382 377.9 L383 379.1 L384 378.7 L385 379.0 L386 379.1 L387 379.1 L388 379.5 L389 380.1 L390 380.2 L391 380.8 L392 381.1 L393 379.7 L394 380.9 L395 379.0 L396 379.5 L397 378.6 L398 377.9 L399 378.6 L400 379.1 L401 379.0 L402 378.7 L403 378.5 L404 378.4 L405 377.9 L406 378.3 L407 377.4 L408 376.9 L409 378.0 L410 377.5 L411 377.6 L412 377.8 L413 379.3 L414 379.3 L415 381.1 L416 381.7 L417 378.9 L418 380.2 L419 381.9 L420 381.6 L421 380.8 L422 380.6 L423 380.5 L424 379.7 L425 379.1 L426 379.6 L427 378.9 L428 378.5 L429 378.8 L430 378.5 L431 377.6 L432 377.6 L433 376.9 L434 377.1 L435 377.1 L436 376.4 L437 376.8 L438 376.5 L439 377.0 L440 377.8" fill="none" stroke="#e8eef8" stroke-width="1.1" transform="translate(0,-300)"/></svg>
<div class="a" style="left:140px;top:309px;width:160px;height:87px;background:rgba(40,160,40,.32);border-left:1px solid #9ee08e;border-right:1px solid #9ee08e"></div>
<div class="a" style="left:140px;top:309px;width:160px;height:8px;background:linear-gradient(90deg,#14b814,#50f050 50%,#14b814)"></div>
<div class="a" style="left:140px;top:389px;width:160px;height:6px;background:linear-gradient(90deg,#2aa02a,#90d890 50%,#2aa02a)"></div>
<div class="a" style="left:2px;top:396px;width:438px;height:11px;background:linear-gradient(#8a8a8a,#3a3a3a)"></div>
<svg class="a" style="left:2px;top:396px;" width="438" height="6" viewBox="0 0 438 6"><rect x="13" y="1" width="1.5" height="3" fill="#c8c8c8"/><rect x="24" y="1" width="1.5" height="2" fill="#c8c8c8"/><rect x="35" y="1" width="1.5" height="3" fill="#c8c8c8"/><rect x="46" y="1" width="1.5" height="2" fill="#c8c8c8"/><rect x="57" y="1" width="1.5" height="3" fill="#c8c8c8"/><rect x="68" y="1" width="1.5" height="2" fill="#c8c8c8"/><rect x="79" y="1" width="1.5" height="3" fill="#c8c8c8"/><rect x="90" y="1" width="1.5" height="2" fill="#c8c8c8"/><rect x="101" y="1" width="1.5" height="3" fill="#c8c8c8"/><rect x="112" y="1" width="1.5" height="2" fill="#c8c8c8"/><rect x="123" y="1" width="1.5" height="3" fill="#c8c8c8"/><rect x="134" y="1" width="1.5" height="2" fill="#c8c8c8"/><rect x="145" y="1" width="1.5" height="3" fill="#c8c8c8"/><rect x="156" y="1" width="1.5" height="2" fill="#c8c8c8"/><rect x="167" y="1" width="1.5" height="3" fill="#c8c8c8"/><rect x="178" y="1" width="1.5" height="2" fill="#c8c8c8"/><rect x="189" y="1" width="1.5" height="3" fill="#c8c8c8"/><rect x="200" y="1" width="1.5" height="2" fill="#c8c8c8"/><rect x="211" y="1" width="1.5" height="3" fill="#c8c8c8"/><rect x="222" y="1" width="1.5" height="2" fill="#c8c8c8"/><rect x="233" y="1" width="1.5" height="3" fill="#c8c8c8"/><rect x="244" y="1" width="1.5" height="2" fill="#c8c8c8"/><rect x="255" y="1" width="1.5" height="3" fill="#c8c8c8"/><rect x="266" y="1" width="1.5" height="2" fill="#c8c8c8"/><rect x="277" y="1" width="1.5" height="3" fill="#c8c8c8"/><rect x="288" y="1" width="1.5" height="2" fill="#c8c8c8"/><rect x="299" y="1" width="1.5" height="3" fill="#c8c8c8"/><rect x="310" y="1" width="1.5" height="2" fill="#c8c8c8"/><rect x="321" y="1" width="1.5" height="3" fill="#c8c8c8"/><rect x="332" y="1" width="1.5" height="2" fill="#c8c8c8"/><rect x="343" y="1" width="1.5" height="3" fill="#c8c8c8"/><rect x="354" y="1" width="1.5" height="2" fill="#c8c8c8"/><rect x="365" y="1" width="1.5" height="3" fill="#c8c8c8"/><rect x="376" y="1" width="1.5" height="2" fill="#c8c8c8"/><rect x="387" y="1" width="1.5" height="3" fill="#c8c8c8"/><rect x="398" y="1" width="1.5" height="2" fill="#c8c8c8"/><rect x="409" y="1" width="1.5" height="3" fill="#c8c8c8"/><rect x="420" y="1" width="1.5" height="2" fill="#c8c8c8"/><rect x="431" y="1" width="1.5" height="3" fill="#c8c8c8"/><rect x="442" y="1" width="1.5" height="2" fill="#c8c8c8"/></svg>
<div class="t" style="left:49.5px;top:405.5px;width:60px;text-align:center;font-size:9.2px;color:#f4f4f4">14.204</div>
<div class="t" style="left:159.0px;top:405.5px;width:60px;text-align:center;font-size:9.2px;color:#f4f4f4">14.206</div>
<div class="t" style="left:269.0px;top:405.5px;width:60px;text-align:center;font-size:9.2px;color:#f4f4f4">14.208</div>
<div class="t" style="left:379.0px;top:405.5px;width:60px;text-align:center;font-size:9.2px;color:#f4f4f4">14.210</div>
<div class="a" style="left:140px;top:419px;width:1px;height:104px;background:repeating-linear-gradient(#8a8a8a 0 2px,transparent 2px 5px)"></div>
<div class="a" style="left:299px;top:419px;width:1px;height:104px;background:repeating-linear-gradient(#8a8a8a 0 2px,transparent 2px 5px)"></div>
<div class="hdr" style="top:527px;height:18px"><b>External Radio</b></div>
<svg class="a" style="left:426px;top:533px;" width="10" height="6" viewBox="0 0 10 6"><path d="M1.5 4.5h7L5 1z" fill="#111"/></svg>
<div class="a" style="left:2px;top:545px;width:438px;height:174px;background:#000"></div>
<div class="btn" style="left:6px;top:552px;width:24px;height:23px;line-height:21px;font-size:9px;color:#e8e8e8;background:radial-gradient(ellipse 60% 45% at 50% 100%,#b8b010 0%,#6a6400 45%,rgba(0,0,0,0) 100%),linear-gradient(#4c4c4c 0%,#2c2c2c 48%,#000 52%,#000 100%);"><span>►</span></div>
<div class="btn" style="left:33px;top:552px;width:45px;height:23px;line-height:21px;font-size:12.5px;color:#fff;background:radial-gradient(ellipse 60% 45% at 50% 100%,#b8b010 0%,#6a6400 45%,rgba(0,0,0,0) 100%),linear-gradient(#4c4c4c 0%,#2c2c2c 48%,#000 52%,#000 100%);"><span>Track</span></div>
<div class="btn" style="left:81px;top:552px;width:54px;height:23px;line-height:21px;font-size:11.5px;color:#e8e8e8;"><span>Refresh</span></div>
<div class="btn" style="left:138px;top:552px;width:24px;height:23px;line-height:21px;font-size:11px;color:#e8e8e8;"><span>±</span></div>
<div class="btn" style="left:227px;top:552px;width:25px;height:23px;line-height:21px;font-size:11px;color:#e8e8e8;"><span>?</span></div>
<div class="a" style="left:6px;top:581px;width:246px;height:114px;background:#00ffff;box-shadow:inset 0 0 0 1px #8a9898,inset 0 0 5px 2px rgba(110,150,150,.75)"></div>
<div class="t" style="left:14.5px;top:592px;font-size:9.5px;font-weight:bold;color:#123">A</div>
<div class="t" style="left:42px;top:592px;font-size:9.5px;color:#307878">IF Output</div>
<div class="t" style="left:226px;top:592px;font-size:9.5px;color:#123">USB</div>
<div class="t m" style="left:18px;top:621px;font-size:38px;color:#000;transform:scaleY(1.08);transform-origin:top">14.205.000</div>
<div class="a" style="left:6px;top:698px;width:246px;height:8px;background:linear-gradient(#6a6a6a,#3a3a3a)"></div>
<div class="t" style="left:59.0px;top:701.5px;width:140px;text-align:center;font-size:10px;color:#f0f0f0">IC-7300, Online</div>
<div class="hdr" style="top:719px;height:18px"><b>Mode</b></div>
<svg class="a" style="left:426px;top:725px;" width="10" height="6" viewBox="0 0 10 6"><path d="M1.5 4.5h7L5 1z" fill="#111"/></svg>
<div class="a" style="left:2px;top:737px;width:438px;height:127px;background:#000"></div>
<div class="btn" style="left:9px;top:747px;width:60px;height:23px;line-height:21px;font-size:10px;color:#fff;"><span>• • •</span></div>
<div class="btn" style="left:72px;top:747px;width:60px;height:23px;line-height:21px;font-size:11px;color:#e8e8e8;"><span>Step ☰</span></div>
<div class="btn" style="left:137px;top:747px;width:60px;height:23px;line-height:21px;font-size:11px;color:#e8e8e8;"><span>AM</span></div>
<div class="btn" style="left:9px;top:775px;width:60px;height:23px;line-height:21px;font-size:11px;color:#e8e8e8;"><span>SAM</span></div>
<div class="btn" style="left:72px;top:775px;width:60px;height:23px;line-height:21px;font-size:11px;color:#e8e8e8;"><span>CW-U</span></div>
<div class="btn" style="left:137px;top:775px;width:60px;height:23px;line-height:21px;font-size:11px;color:#e8e8e8;"><span>BC-FM</span></div>
<div class="btn" style="left:9px;top:803px;width:60px;height:23px;line-height:21px;font-size:11px;color:#e8e8e8;"><span>N-FM</span></div>
<div class="btn" style="left:72px;top:803px;width:60px;height:23px;line-height:21px;font-size:11px;color:#e8e8e8;"><span>W-FM</span></div>
<div class="btn" style="left:137px;top:803px;width:60px;height:23px;line-height:21px;font-size:11px;color:#e8e8e8;"><span>LSB</span></div>
<div class="btn" style="left:9px;top:831px;width:60px;height:23px;line-height:21px;font-size:12px;color:#fff;background:radial-gradient(ellipse 60% 45% at 50% 100%,#b8b010 0%,#6a6400 45%,rgba(0,0,0,0) 100%),linear-gradient(#4c4c4c 0%,#2c2c2c 48%,#000 52%,#000 100%);"><span>USB</span></div>
<div class="btn" style="left:72px;top:831px;width:60px;height:23px;line-height:21px;font-size:11px;color:#e8e8e8;"><span>Wide-L</span></div>
<div class="btn" style="left:137px;top:831px;width:60px;height:23px;line-height:21px;font-size:11px;color:#e8e8e8;"><span>Wide-U</span></div>
<div class="hdr" style="top:864px;height:18px"><b>Filter</b></div>
<svg class="a" style="left:426px;top:870px;" width="10" height="6" viewBox="0 0 10 6"><path d="M1.5 4.5h7L5 1z" fill="#111"/></svg>
<div class="a" style="left:2px;top:882px;width:438px;height:99px;background:#000"></div>
<div class="btn" style="left:9px;top:892px;width:60px;height:23px;line-height:21px;font-size:10px;color:#fff;"><span>• • •</span></div>
<div class="btn" style="left:72px;top:892px;width:60px;height:23px;line-height:21px;font-size:11px;color:#e8e8e8;"><span>2.2kHz</span></div>
<div class="btn" style="left:137px;top:892px;width:60px;height:23px;line-height:21px;font-size:11px;color:#e8e8e8;"><span>2.4kHz</span></div>
<div class="btn" style="left:9px;top:920px;width:60px;height:23px;line-height:21px;font-size:11px;color:#e8e8e8;"><span>2.6kHz</span></div>
<div class="btn" style="left:72px;top:920px;width:60px;height:23px;line-height:21px;font-size:11px;color:#e8e8e8;"><span>2.8kHz</span></div>
<div class="btn" style="left:137px;top:920px;width:60px;height:23px;line-height:21px;font-size:11px;color:#e8e8e8;"><span>3.0kHz</span></div>
<div class="btn" style="left:9px;top:948px;width:60px;height:23px;line-height:21px;font-size:11px;color:#e8e8e8;"><span>3.2kHz</span></div>
<div class="btn" style="left:72px;top:948px;width:60px;height:23px;line-height:21px;font-size:11px;color:#e8e8e8;"><span>3.4kHz</span></div>
<div class="btn" style="left:137px;top:948px;width:60px;height:23px;line-height:21px;font-size:11px;color:#e8e8e8;"><span>3.6kHz</span></div>
<div class="hdr" style="top:981px;height:18px"><b>AGC: Slow</b></div>
<svg class="a" style="left:426px;top:987px;" width="10" height="6" viewBox="0 0 10 6"><path d="M1.5 1.5h7L5 5z" fill="#111"/></svg>
<div class="hdr" style="top:999px;height:17px"><b>CW: Off</b></div>
<svg class="a" style="left:426px;top:1005px;" width="10" height="6" viewBox="0 0 10 6"><path d="M1.5 1.5h7L5 5z" fill="#111"/></svg>
<div class="a" style="left:457px;top:137px;width:1463px;height:880px;background:#f0f0f0"></div>
<div class="a" style="left:461px;top:138px;width:1419px;height:335px;background:#0c0c0c"></div>
<div class="a" style="left:513px;top:160px;width:1315px;height:1px;background:repeating-linear-gradient(90deg,#545454 0 1.3px,transparent 1.3px 4px)"></div>
<div class="a" style="left:513px;top:175px;width:1315px;height:1px;background:repeating-linear-gradient(90deg,#545454 0 1.3px,transparent 1.3px 4px)"></div>
<div class="a" style="left:513px;top:191px;width:1315px;height:1px;background:repeating-linear-gradient(90deg,#545454 0 1.3px,transparent 1.3px 4px)"></div>
<div class="a" style="left:513px;top:206px;width:1315px;height:1px;background:repeating-linear-gradient(90deg,#545454 0 1.3px,transparent 1.3px 4px)"></div>
<div class="a" style="left:513px;top:221px;width:1315px;height:1px;background:repeating-linear-gradient(90deg,#545454 0 1.3px,transparent 1.3px 4px)"></div>
<div class="a" style="left:513px;top:236px;width:1315px;height:1px;background:repeating-linear-gradient(90deg,#545454 0 1.3px,transparent 1.3px 4px)"></div>
<div class="a" style="left:513px;top:251px;width:1315px;height:1px;background:repeating-linear-gradient(90deg,#545454 0 1.3px,transparent 1.3px 4px)"></div>
<div class="a" style="left:513px;top:267px;width:1315px;height:1px;background:repeating-linear-gradient(90deg,#545454 0 1.3px,transparent 1.3px 4px)"></div>
<div class="a" style="left:513px;top:282px;width:1315px;height:1px;background:repeating-linear-gradient(90deg,#545454 0 1.3px,transparent 1.3px 4px)"></div>
<div class="a" style="left:513px;top:300px;width:1315px;height:1px;background:repeating-linear-gradient(90deg,#545454 0 1.3px,transparent 1.3px 4px)"></div>
<div class="a" style="left:513px;top:318px;width:1315px;height:1px;background:repeating-linear-gradient(90deg,#545454 0 1.3px,transparent 1.3px 4px)"></div>
<div class="a" style="left:513px;top:336px;width:1315px;height:1px;background:repeating-linear-gradient(90deg,#545454 0 1.3px,transparent 1.3px 4px)"></div>
<div class="a" style="left:513px;top:355px;width:1315px;height:1px;background:repeating-linear-gradient(90deg,#545454 0 1.3px,transparent 1.3px 4px)"></div>
<div class="a" style="left:513px;top:373px;width:1315px;height:1px;background:repeating-linear-gradient(90deg,#545454 0 1.3px,transparent 1.3px 4px)"></div>
<div class="a" style="left:513px;top:391px;width:1315px;height:1px;background:repeating-linear-gradient(90deg,#545454 0 1.3px,transparent 1.3px 4px)"></div>
<div class="a" style="left:513px;top:409px;width:1315px;height:1px;background:repeating-linear-gradient(90deg,#545454 0 1.3px,transparent 1.3px 4px)"></div>
<div class="a" style="left:520px;top:143px;width:378px;height:52px;background:#000;box-shadow:0 0 4px 2px #000"></div>
<div class="a" style="left:520px;top:190px;width:293px;height:38px;background:#000;box-shadow:0 0 4px 2px #000"></div>
<div class="t m" style="left:523px;top:147.5px;font-size:43.8px;color:#fff;transform:scaleY(1.06);transform-origin:top">14.205.000</div>
<div class="t m" style="left:802px;top:150.5px;font-size:13.2px;color:#d8d040">RX 1</div>
<div class="t m" style="left:849px;top:150.5px;font-size:13.2px;color:#e4e4e4">USB</div>
<div class="t m" style="left:802px;top:173px;font-size:11.4px;color:#cccc38;font-weight:bold">100 - 3000 Hz</div>
<div class="t m" style="left:549px;top:205px;font-size:19.5px;color:#fff">8.4</div>
<div class="t" style="left:590px;top:208.5px;font-size:12.5px;color:#f0f0f0;transform:scaleX(.95);transform-origin:left">dB</div>
<div class="a" style="left:613px;top:201px;width:8px;height:7px;background:#5a5a50"></div>
<div class="a" style="left:621.5px;top:201px;width:7px;height:7px;border-radius:50%;background:#f0f020"></div>
<div class="a" style="left:613px;top:213px;width:195px;height:2px;background:#9a3a3a"></div>
<div class="t" style="left:790px;top:200.5px;font-size:9.5px;color:#b8b8b8;font-weight:bold;transform:scaleX(.9);transform-origin:left">SNR</div>
<div class="t" style="left:620.5px;top:217.5px;width:40px;text-align:center;font-size:8.6px;color:#c8d0d0;font-weight:bold;font-family:Liberation Mono">20</div>
<div class="t" style="left:648.5px;top:217.5px;width:40px;text-align:center;font-size:8.6px;color:#c8d0d0;font-weight:bold;font-family:Liberation Mono">40</div>
<div class="t" style="left:676.5px;top:217.5px;width:40px;text-align:center;font-size:8.6px;color:#c8d0d0;font-weight:bold;font-family:Liberation Mono">60</div>
<div class="t" style="left:704.5px;top:217.5px;width:40px;text-align:center;font-size:8.6px;color:#c8d0d0;font-weight:bold;font-family:Liberation Mono">80</div>
<div class="t" style="left:732.5px;top:217.5px;width:40px;text-align:center;font-size:8.6px;color:#c8d0d0;font-weight:bold;font-family:Liberation Mono">100</div>
<div class="t" style="left:760.5px;top:217.5px;width:40px;text-align:center;font-size:8.6px;color:#c8d0d0;font-weight:bold;font-family:Liberation Mono">120</div>
<div class="a" style="left:1171px;top:140px;width:43px;height:272px;background:linear-gradient(#008400 0%,#007400 13%,rgba(20,110,20,.7) 14%,rgba(35,105,35,.55) 42%,rgba(65,85,65,.4) 72%,rgba(85,85,85,.33) 100%);border-left:1px solid #8cc88c;border-right:1px solid #8cc88c"></div>
<svg class="a" style="left:0px;top:0px;" width="1920" height="1040" viewBox="0 0 1920 1040"><defs><linearGradient id="spb" x1="0" y1="360" x2="0" y2="413" gradientUnits="userSpaceOnUse"><stop offset="0" stop-color="#2a66b8"/><stop offset=".5" stop-color="#1c4e9e"/><stop offset=".8" stop-color="#182a94"/><stop offset="1" stop-color="#121490"/></linearGradient></defs><path d="M461 413 L461 384.7 L462 385.0 L463 384.5 L464 385.2 L465 382.5 L466 384.1 L467 383.1 L468 386.4 L469 386.5 L470 386.5 L471 387.4 L472 387.4 L473 386.7 L474 386.7 L475 378.2 L476 385.8 L477 384.5 L478 381.0 L479 384.5 L480 387.9 L481 388.7 L482 382.8 L483 383.7 L484 388.1 L485 387.0 L486 383.6 L487 388.8 L488 390.5 L489 389.4 L490 390.2 L491 391.5 L492 390.1 L493 386.9 L494 390.5 L495 389.8 L496 388.9 L497 390.2 L498 389.5 L499 388.7 L500 387.5 L501 387.0 L502 386.8 L503 387.0 L504 387.1 L505 386.5 L506 387.6 L507 387.8 L508 389.4 L509 390.4 L510 389.2 L511 390.2 L512 385.0 L513 389.2 L514 388.7 L515 387.8 L516 388.9 L517 388.8 L518 388.5 L519 386.8 L520 387.9 L521 387.2 L522 387.1 L523 387.8 L524 388.1 L525 386.8 L526 387.7 L527 387.8 L528 388.3 L529 389.3 L530 391.3 L531 391.7 L532 393.4 L533 393.3 L534 392.3 L535 391.5 L536 389.8 L537 388.9 L538 388.1 L539 388.9 L540 389.9 L541 389.8 L542 389.1 L543 389.2 L544 390.7 L545 390.2 L546 390.0 L547 388.2 L548 386.2 L549 385.8 L550 387.1 L551 386.4 L552 386.0 L553 386.5 L554 386.5 L555 387.7 L556 387.5 L557 385.2 L558 384.3 L559 382.6 L560 385.5 L561 386.7 L562 386.7 L563 387.5 L564 386.6 L565 385.7 L566 383.4 L567 383.6 L568 384.9 L569 387.3 L570 388.8 L571 390.4 L572 389.6 L573 388.7 L574 388.7 L575 386.9 L576 384.3 L577 375.7 L578 383.3 L579 384.5 L580 386.4 L581 388.0 L582 389.4 L583 389.4 L584 389.9 L585 391.0 L586 388.5 L587 391.5 L588 390.6 L589 388.7 L590 388.0 L591 387.1 L592 386.9 L593 387.5 L594 386.8 L595 386.6 L596 386.6 L597 388.8 L598 388.4 L599 388.1 L600 387.6 L601 383.4 L602 387.7 L603 388.8 L604 386.0 L605 385.6 L606 386.4 L607 386.2 L608 385.9 L609 384.2 L610 383.8 L611 383.7 L612 384.7 L613 385.7 L614 386.4 L615 386.4 L616 382.5 L617 386.4 L618 387.1 L619 387.4 L620 387.6 L621 384.3 L622 387.5 L623 388.2 L624 380.6 L625 383.7 L626 386.6 L627 385.9 L628 379.2 L629 385.2 L630 386.1 L631 384.7 L632 384.7 L633 385.0 L634 385.4 L635 387.2 L636 387.9 L637 384.6 L638 388.2 L639 383.5 L640 387.0 L641 388.6 L642 390.2 L643 390.3 L644 390.3 L645 380.9 L646 386.0 L647 386.6 L648 387.1 L649 385.1 L650 385.6 L651 377.0 L652 384.4 L653 383.1 L654 383.1 L655 381.8 L656 382.5 L657 383.8 L658 384.0 L659 384.0 L660 385.0 L661 385.7 L662 387.2 L663 388.2 L664 387.0 L665 386.4 L666 386.5 L667 387.6 L668 381.7 L669 384.5 L670 388.3 L671 387.9 L672 388.3 L673 387.5 L674 386.4 L675 385.6 L676 385.4 L677 386.1 L678 387.8 L679 389.4 L680 390.2 L681 389.4 L682 390.5 L683 390.5 L684 391.6 L685 391.4 L686 390.4 L687 390.3 L688 388.4 L689 387.2 L690 386.2 L691 384.9 L692 383.4 L693 383.2 L694 384.6 L695 384.3 L696 384.5 L697 384.5 L698 385.0 L699 384.8 L700 385.1 L701 386.6 L702 387.9 L703 387.0 L704 386.0 L705 386.4 L706 386.8 L707 387.3 L708 388.1 L709 387.3 L710 386.4 L711 385.3 L712 383.9 L713 380.3 L714 384.6 L715 386.0 L716 386.7 L717 387.9 L718 389.6 L719 382.9 L720 390.0 L721 388.7 L722 388.1 L723 388.8 L724 388.1 L725 388.4 L726 388.2 L727 388.7 L728 388.6 L729 389.3 L730 390.5 L731 390.1 L732 390.6 L733 390.3 L734 390.4 L735 388.4 L736 389.0 L737 388.0 L738 388.9 L739 389.2 L740 386.8 L741 389.6 L742 383.6 L743 388.5 L744 388.7 L745 389.5 L746 388.3 L747 388.0 L748 386.6 L749 385.8 L750 385.2 L751 385.5 L752 384.7 L753 385.3 L754 384.2 L755 383.9 L756 385.5 L757 386.8 L758 385.7 L759 386.3 L760 385.8 L761 385.9 L762 386.7 L763 385.6 L764 385.7 L765 385.9 L766 385.5 L767 385.9 L768 388.7 L769 388.7 L770 388.0 L771 388.0 L772 387.7 L773 386.6 L774 384.7 L775 384.5 L776 378.4 L777 384.6 L778 386.2 L779 387.1 L780 385.6 L781 385.6 L782 388.3 L783 389.8 L784 391.1 L785 385.0 L786 387.8 L787 382.5 L788 389.4 L789 390.2 L790 388.4 L791 388.6 L792 386.9 L793 387.3 L794 386.6 L795 387.4 L796 388.1 L797 386.6 L798 388.5 L799 389.3 L800 389.2 L801 389.7 L802 389.7 L803 389.4 L804 391.5 L805 392.3 L806 391.7 L807 390.9 L808 389.9 L809 388.6 L810 389.1 L811 386.3 L812 384.9 L813 384.5 L814 384.2 L815 385.1 L816 387.1 L817 388.8 L818 389.6 L819 389.1 L820 388.8 L821 389.0 L822 388.0 L823 388.4 L824 389.1 L825 389.5 L826 389.0 L827 387.2 L828 387.0 L829 386.3 L830 386.9 L831 386.6 L832 385.6 L833 385.5 L834 385.4 L835 386.5 L836 387.8 L837 387.6 L838 389.2 L839 390.1 L840 389.3 L841 388.7 L842 387.5 L843 385.9 L844 385.0 L845 386.8 L846 386.5 L847 388.2 L848 388.3 L849 383.0 L850 388.0 L851 388.8 L852 388.1 L853 385.5 L854 387.8 L855 386.6 L856 385.7 L857 387.0 L858 387.9 L859 388.9 L860 387.7 L861 387.5 L862 387.9 L863 386.4 L864 387.5 L865 386.9 L866 387.6 L867 389.9 L868 390.2 L869 389.6 L870 390.7 L871 390.8 L872 390.1 L873 390.2 L874 391.1 L875 390.9 L876 390.1 L877 389.4 L878 389.4 L879 386.5 L880 386.9 L881 387.1 L882 386.9 L883 386.7 L884 387.2 L885 386.4 L886 387.3 L887 388.2 L888 385.9 L889 387.0 L890 385.9 L891 385.9 L892 385.9 L893 385.2 L894 384.9 L895 385.6 L896 384.1 L897 385.0 L898 385.2 L899 386.0 L900 386.3 L901 387.2 L902 387.7 L903 387.5 L904 386.4 L905 386.0 L906 380.1 L907 385.0 L908 384.2 L909 376.7 L910 385.7 L911 386.4 L912 386.7 L913 386.9 L914 386.4 L915 387.7 L916 387.8 L917 387.6 L918 388.7 L919 387.4 L920 389.7 L921 391.0 L922 389.6 L923 391.5 L924 391.5 L925 391.2 L926 389.5 L927 389.6 L928 387.4 L929 386.1 L930 384.1 L931 387.2 L932 387.4 L933 383.1 L934 388.7 L935 388.6 L936 388.0 L937 387.7 L938 387.8 L939 388.5 L940 386.6 L941 386.9 L942 386.9 L943 387.8 L944 388.2 L945 387.7 L946 387.1 L947 386.0 L948 386.6 L949 386.3 L950 385.5 L951 385.9 L952 380.8 L953 384.0 L954 383.3 L955 384.5 L956 384.9 L957 388.1 L958 387.6 L959 387.7 L960 386.3 L961 385.2 L962 375.5 L963 384.4 L964 383.8 L965 385.4 L966 386.5 L967 386.5 L968 387.2 L969 387.1 L970 379.6 L971 388.2 L972 387.7 L973 381.2 L974 383.2 L975 387.7 L976 387.3 L977 389.0 L978 389.5 L979 391.0 L980 391.3 L981 391.6 L982 391.0 L983 390.1 L984 390.4 L985 389.7 L986 390.9 L987 391.0 L988 391.4 L989 391.3 L990 391.1 L991 389.6 L992 390.0 L993 389.4 L994 389.4 L995 388.4 L996 386.9 L997 387.3 L998 387.1 L999 387.0 L1000 385.6 L1001 385.7 L1002 385.3 L1003 386.8 L1004 387.3 L1005 387.5 L1006 389.0 L1007 389.7 L1008 390.7 L1009 390.7 L1010 389.6 L1011 388.1 L1012 388.9 L1013 388.9 L1014 382.3 L1015 387.3 L1016 387.8 L1017 387.9 L1018 387.7 L1019 388.1 L1020 388.8 L1021 388.4 L1022 389.1 L1023 388.8 L1024 387.4 L1025 387.9 L1026 385.4 L1027 387.0 L1028 387.3 L1029 386.9 L1030 388.0 L1031 386.5 L1032 385.7 L1033 384.4 L1034 384.3 L1035 384.3 L1036 382.7 L1037 381.6 L1038 382.6 L1039 383.1 L1040 384.9 L1041 386.0 L1042 387.0 L1043 387.9 L1044 387.4 L1045 388.7 L1046 389.2 L1047 382.7 L1048 389.2 L1049 384.3 L1050 387.0 L1051 387.4 L1052 388.0 L1053 387.8 L1054 389.6 L1055 389.9 L1056 389.3 L1057 386.7 L1058 387.3 L1059 386.6 L1060 386.5 L1061 381.5 L1062 386.7 L1063 384.9 L1064 385.0 L1065 384.2 L1066 384.9 L1067 385.4 L1068 380.5 L1069 385.2 L1070 385.1 L1071 385.7 L1072 387.5 L1073 383.0 L1074 388.1 L1075 388.7 L1076 388.1 L1077 387.6 L1078 387.5 L1079 386.5 L1080 379.8 L1081 383.0 L1082 382.2 L1083 383.1 L1084 382.6 L1085 377.7 L1086 386.3 L1087 387.5 L1088 389.0 L1089 390.0 L1090 389.9 L1091 387.7 L1092 386.9 L1093 387.0 L1094 387.0 L1095 387.7 L1096 382.7 L1097 386.9 L1098 386.7 L1099 386.3 L1100 386.5 L1101 386.1 L1102 386.2 L1103 388.2 L1104 389.3 L1105 389.5 L1106 387.6 L1107 387.3 L1108 388.3 L1109 387.3 L1110 387.6 L1111 387.7 L1112 389.3 L1113 389.5 L1114 389.8 L1115 390.2 L1116 390.4 L1117 389.0 L1118 388.2 L1119 386.6 L1120 384.0 L1121 383.3 L1122 383.6 L1123 377.2 L1124 383.3 L1125 384.3 L1126 376.3 L1127 385.0 L1128 385.5 L1129 387.2 L1130 386.7 L1131 387.7 L1132 386.7 L1133 386.6 L1134 386.4 L1135 385.5 L1136 386.4 L1137 386.8 L1138 382.4 L1139 385.0 L1140 383.5 L1141 382.9 L1142 382.5 L1143 376.8 L1144 384.1 L1145 384.7 L1146 384.8 L1147 384.3 L1148 377.9 L1149 387.4 L1150 386.6 L1151 386.2 L1152 384.7 L1153 384.4 L1154 385.8 L1155 385.6 L1156 386.4 L1157 386.0 L1158 386.0 L1159 385.6 L1160 386.0 L1161 386.4 L1162 387.2 L1163 385.8 L1164 384.8 L1165 384.1 L1166 384.5 L1167 381.5 L1168 375.0 L1169 368.5 L1170 362.0 L1171 368.5 L1172 375.0 L1173 381.5 L1174 387.2 L1175 387.4 L1176 387.1 L1177 385.7 L1178 386.1 L1179 385.9 L1180 384.7 L1181 385.6 L1182 386.3 L1183 384.8 L1184 385.2 L1185 380.2 L1186 384.2 L1187 384.6 L1188 385.3 L1189 386.2 L1190 386.1 L1191 385.0 L1192 384.6 L1193 385.2 L1194 387.5 L1195 386.5 L1196 388.0 L1197 388.0 L1198 388.3 L1199 388.6 L1200 387.7 L1201 387.5 L1202 386.0 L1203 385.4 L1204 386.5 L1205 385.3 L1206 386.4 L1207 379.4 L1208 388.2 L1209 389.6 L1210 389.1 L1211 389.0 L1212 388.1 L1213 387.2 L1214 386.4 L1215 386.8 L1216 381.0 L1217 387.0 L1218 385.5 L1219 384.9 L1220 384.6 L1221 384.7 L1222 387.2 L1223 386.4 L1224 378.6 L1225 386.2 L1226 378.8 L1227 386.4 L1228 384.7 L1229 386.0 L1230 386.1 L1231 387.3 L1232 387.5 L1233 386.9 L1234 387.7 L1235 388.3 L1236 388.8 L1237 389.4 L1238 389.8 L1239 391.4 L1240 392.3 L1241 390.7 L1242 389.5 L1243 388.1 L1244 380.4 L1245 389.1 L1246 387.2 L1247 379.3 L1248 384.3 L1249 385.4 L1250 385.8 L1251 386.9 L1252 387.2 L1253 387.7 L1254 386.3 L1255 385.4 L1256 385.3 L1257 386.8 L1258 386.9 L1259 387.4 L1260 387.1 L1261 388.5 L1262 387.6 L1263 383.7 L1264 386.8 L1265 386.0 L1266 386.0 L1267 386.1 L1268 385.7 L1269 385.7 L1270 385.3 L1271 385.6 L1272 386.0 L1273 385.4 L1274 386.2 L1275 385.1 L1276 384.7 L1277 384.1 L1278 384.1 L1279 383.8 L1280 383.8 L1281 385.2 L1282 385.5 L1283 384.8 L1284 386.6 L1285 386.9 L1286 387.0 L1287 386.6 L1288 387.5 L1289 381.8 L1290 382.2 L1291 389.9 L1292 390.2 L1293 390.3 L1294 390.9 L1295 387.1 L1296 390.0 L1297 389.6 L1298 389.5 L1299 390.3 L1300 389.7 L1301 390.2 L1302 389.3 L1303 388.8 L1304 388.2 L1305 387.6 L1306 387.7 L1307 388.8 L1308 387.0 L1309 387.1 L1310 382.0 L1311 376.0 L1312 370.0 L1313 376.0 L1314 382.0 L1315 389.4 L1316 385.5 L1317 390.7 L1318 390.4 L1319 389.4 L1320 388.6 L1321 387.5 L1322 386.8 L1323 388.3 L1324 387.2 L1325 387.7 L1326 388.6 L1327 387.1 L1328 390.0 L1329 388.6 L1330 387.8 L1331 388.3 L1332 387.9 L1333 387.5 L1334 386.4 L1335 385.1 L1336 385.6 L1337 386.3 L1338 386.5 L1339 387.1 L1340 386.4 L1341 386.3 L1342 385.9 L1343 388.0 L1344 387.2 L1345 387.8 L1346 387.1 L1347 386.6 L1348 386.4 L1349 386.2 L1350 387.3 L1351 388.0 L1352 389.4 L1353 389.6 L1354 390.1 L1355 390.6 L1356 390.4 L1357 388.5 L1358 388.6 L1359 383.6 L1360 388.3 L1361 385.8 L1362 380.2 L1363 387.3 L1364 388.8 L1365 389.4 L1366 388.8 L1367 389.0 L1368 389.3 L1369 390.1 L1370 389.8 L1371 390.2 L1372 390.2 L1373 390.2 L1374 391.1 L1375 392.2 L1376 387.9 L1377 386.5 L1378 390.4 L1379 389.0 L1380 388.3 L1381 387.6 L1382 386.0 L1383 385.6 L1384 384.8 L1385 384.6 L1386 386.6 L1387 387.2 L1388 388.4 L1389 388.3 L1390 386.7 L1391 385.8 L1392 386.4 L1393 387.7 L1394 388.9 L1395 387.8 L1396 387.0 L1397 386.0 L1398 385.6 L1399 386.1 L1400 387.3 L1401 388.6 L1402 388.7 L1403 388.0 L1404 388.0 L1405 384.7 L1406 381.3 L1407 378.0 L1408 381.3 L1409 384.7 L1410 384.5 L1411 379.1 L1412 386.1 L1413 385.9 L1414 386.8 L1415 387.2 L1416 380.7 L1417 387.7 L1418 387.4 L1419 386.0 L1420 380.4 L1421 385.8 L1422 385.8 L1423 386.0 L1424 386.7 L1425 383.6 L1426 385.6 L1427 385.1 L1428 386.2 L1429 386.0 L1430 385.4 L1431 386.3 L1432 387.2 L1433 387.2 L1434 388.7 L1435 388.6 L1436 388.5 L1437 388.9 L1438 388.2 L1439 389.2 L1440 389.5 L1441 388.4 L1442 388.7 L1443 388.5 L1444 388.2 L1445 386.8 L1446 386.6 L1447 388.5 L1448 388.9 L1449 388.5 L1450 388.2 L1451 387.4 L1452 382.2 L1453 388.6 L1454 388.2 L1455 386.8 L1456 387.4 L1457 380.9 L1458 388.1 L1459 387.0 L1460 386.9 L1461 386.8 L1462 385.9 L1463 385.3 L1464 386.8 L1465 385.6 L1466 385.2 L1467 384.8 L1468 385.6 L1469 385.6 L1470 385.7 L1471 386.9 L1472 388.2 L1473 388.4 L1474 388.1 L1475 386.9 L1476 388.2 L1477 389.0 L1478 387.6 L1479 389.5 L1480 389.6 L1481 389.1 L1482 388.7 L1483 387.7 L1484 387.7 L1485 386.8 L1486 387.7 L1487 380.7 L1488 386.3 L1489 387.3 L1490 387.2 L1491 386.9 L1492 388.9 L1493 383.0 L1494 389.4 L1495 391.4 L1496 390.2 L1497 389.8 L1498 389.9 L1499 387.3 L1500 387.4 L1501 388.1 L1502 387.4 L1503 388.3 L1504 388.4 L1505 380.9 L1506 386.8 L1507 385.4 L1508 383.6 L1509 385.1 L1510 385.3 L1511 386.2 L1512 386.6 L1513 385.5 L1514 387.0 L1515 378.1 L1516 385.2 L1517 385.5 L1518 385.4 L1519 384.8 L1520 385.6 L1521 386.2 L1522 386.3 L1523 387.8 L1524 388.2 L1525 387.4 L1526 385.9 L1527 386.4 L1528 382.8 L1529 386.6 L1530 386.1 L1531 388.0 L1532 381.8 L1533 388.4 L1534 389.5 L1535 389.3 L1536 390.3 L1537 388.9 L1538 389.5 L1539 388.6 L1540 388.2 L1541 387.8 L1542 387.4 L1543 388.7 L1544 388.0 L1545 381.2 L1546 386.7 L1547 385.6 L1548 387.1 L1549 386.5 L1550 387.2 L1551 388.5 L1552 388.9 L1553 388.0 L1554 388.9 L1555 389.3 L1556 389.1 L1557 389.1 L1558 388.8 L1559 388.5 L1560 388.4 L1561 389.0 L1562 386.1 L1563 389.2 L1564 390.0 L1565 388.6 L1566 388.5 L1567 388.1 L1568 388.0 L1569 386.8 L1570 387.8 L1571 388.1 L1572 387.7 L1573 388.4 L1574 385.7 L1575 385.2 L1576 383.8 L1577 384.1 L1578 383.5 L1579 382.9 L1580 382.5 L1581 383.5 L1582 379.0 L1583 385.2 L1584 387.4 L1585 386.5 L1586 380.6 L1587 386.6 L1588 386.8 L1589 388.8 L1590 386.6 L1591 386.0 L1592 385.9 L1593 385.7 L1594 384.9 L1595 385.5 L1596 387.3 L1597 389.0 L1598 388.5 L1599 387.7 L1600 388.3 L1601 387.7 L1602 387.0 L1603 387.1 L1604 386.3 L1605 388.8 L1606 390.6 L1607 392.3 L1608 392.0 L1609 392.1 L1610 390.2 L1611 388.8 L1612 387.3 L1613 387.8 L1614 390.3 L1615 390.1 L1616 390.8 L1617 390.6 L1618 391.0 L1619 392.0 L1620 392.6 L1621 391.9 L1622 393.1 L1623 391.8 L1624 391.4 L1625 389.1 L1626 388.9 L1627 385.4 L1628 389.4 L1629 389.0 L1630 383.7 L1631 388.8 L1632 386.6 L1633 380.5 L1634 387.9 L1635 382.6 L1636 387.2 L1637 386.5 L1638 385.7 L1639 385.0 L1640 386.7 L1641 386.3 L1642 387.6 L1643 387.2 L1644 386.7 L1645 385.8 L1646 385.0 L1647 386.7 L1648 385.2 L1649 385.9 L1650 384.8 L1651 384.5 L1652 383.9 L1653 384.6 L1654 383.4 L1655 385.5 L1656 386.1 L1657 385.8 L1658 384.4 L1659 384.6 L1660 384.7 L1661 384.1 L1662 385.4 L1663 385.3 L1664 387.9 L1665 388.3 L1666 389.2 L1667 389.4 L1668 388.9 L1669 389.4 L1670 388.1 L1671 388.2 L1672 386.2 L1673 387.1 L1674 387.4 L1675 385.8 L1676 385.7 L1677 384.6 L1678 384.0 L1679 384.3 L1680 385.5 L1681 385.3 L1682 384.9 L1683 383.5 L1684 382.4 L1685 382.0 L1686 383.2 L1687 382.8 L1688 386.7 L1689 386.4 L1690 386.8 L1691 385.0 L1692 382.0 L1693 379.0 L1694 382.0 L1695 385.0 L1696 386.2 L1697 385.4 L1698 386.6 L1699 381.8 L1700 385.5 L1701 385.6 L1702 384.9 L1703 384.1 L1704 382.6 L1705 383.0 L1706 382.7 L1707 382.9 L1708 385.2 L1709 385.6 L1710 382.5 L1711 388.0 L1712 388.2 L1713 388.9 L1714 388.8 L1715 389.7 L1716 390.2 L1717 385.5 L1718 390.6 L1719 390.3 L1720 389.8 L1721 390.3 L1722 384.0 L1723 390.7 L1724 390.4 L1725 390.3 L1726 390.5 L1727 388.5 L1728 387.8 L1729 382.5 L1730 387.5 L1731 380.0 L1732 387.3 L1733 386.0 L1734 387.3 L1735 385.1 L1736 385.1 L1737 382.2 L1738 384.1 L1739 383.9 L1740 384.6 L1741 376.4 L1742 383.9 L1743 383.7 L1744 383.9 L1745 383.9 L1746 384.9 L1747 379.5 L1748 385.0 L1749 384.5 L1750 385.2 L1751 384.9 L1752 384.9 L1753 385.9 L1754 387.4 L1755 386.8 L1756 387.8 L1757 389.1 L1758 390.1 L1759 389.2 L1760 387.8 L1761 388.6 L1762 388.8 L1763 389.8 L1764 383.6 L1765 382.2 L1766 388.1 L1767 386.9 L1768 385.6 L1769 379.7 L1770 385.6 L1771 386.2 L1772 386.7 L1773 386.7 L1774 387.2 L1775 388.3 L1776 389.5 L1777 388.1 L1778 387.7 L1779 387.0 L1780 384.3 L1781 387.5 L1782 387.5 L1783 386.0 L1784 386.6 L1785 386.2 L1786 387.1 L1787 384.3 L1788 380.7 L1789 377.0 L1790 380.7 L1791 384.3 L1792 390.4 L1793 390.0 L1794 390.2 L1795 390.2 L1796 389.1 L1797 388.0 L1798 386.7 L1799 388.5 L1800 381.8 L1801 388.4 L1802 387.4 L1803 386.5 L1804 386.8 L1805 386.3 L1806 385.0 L1807 384.3 L1808 384.0 L1809 384.8 L1810 383.7 L1811 383.4 L1812 384.6 L1813 384.3 L1814 384.9 L1815 386.4 L1816 386.8 L1817 387.9 L1818 388.8 L1819 389.7 L1820 390.8 L1821 390.2 L1822 390.1 L1823 390.6 L1824 390.0 L1825 390.9 L1826 390.3 L1827 390.0 L1828 389.5 L1829 389.8 L1830 388.3 L1831 388.3 L1832 387.8 L1833 388.7 L1834 383.2 L1835 390.2 L1836 389.1 L1837 388.8 L1838 389.0 L1839 384.4 L1840 388.3 L1841 388.9 L1842 388.7 L1843 388.8 L1844 388.5 L1845 387.6 L1846 387.3 L1847 388.7 L1848 387.2 L1849 386.6 L1850 386.4 L1851 385.4 L1852 385.4 L1853 383.8 L1854 385.3 L1855 384.5 L1856 384.6 L1857 386.1 L1858 381.4 L1859 385.8 L1860 386.0 L1861 386.1 L1862 387.7 L1863 387.7 L1864 388.3 L1865 388.8 L1866 389.8 L1867 388.7 L1868 390.6 L1869 390.2 L1870 390.3 L1871 387.2 L1872 391.4 L1873 391.3 L1874 390.8 L1875 391.2 L1876 391.3 L1877 390.1 L1878 388.1 L1879 388.1 L1880 388.9 L1880 413Z" fill="url(#spb)"/><path d="M461 384.7 L462 385.0 L463 384.5 L464 385.2 L465 382.5 L466 384.1 L467 383.1 L468 386.4 L469 386.5 L470 386.5 L471 387.4 L472 387.4 L473 386.7 L474 386.7 L475 378.2 L476 385.8 L477 384.5 L478 381.0 L479 384.5 L480 387.9 L481 388.7 L482 382.8 L483 383.7 L484 388.1 L485 387.0 L486 383.6 L487 388.8 L488 390.5 L489 389.4 L490 390.2 L491 391.5 L492 390.1 L493 386.9 L494 390.5 L495 389.8 L496 388.9 L497 390.2 L498 389.5 L499 388.7 L500 387.5 L501 387.0 L502 386.8 L503 387.0 L504 387.1 L505 386.5 L506 387.6 L507 387.8 L508 389.4 L509 390.4 L510 389.2 L511 390.2 L512 385.0 L513 389.2 L514 388.7 L515 387.8 L516 388.9 L517 388.8 L518 388.5 L519 386.8 L520 387.9 L521 387.2 L522 387.1 L523 387.8 L524 388.1 L525 386.8 L526 387.7 L527 387.8 L528 388.3 L529 389.3 L530 391.3 L531 391.7 L532 393.4 L533 393.3 L534 392.3 L535 391.5 L536 389.8 L537 388.9 L538 388.1 L539 388.9 L540 389.9 L541 389.8 L542 389.1 L543 389.2 L544 390.7 L545 390.2 L546 390.0 L547 388.2 L548 386.2 L549 385.8 L550 387.1 L551 386.4 L552 386.0 L553 386.5 L554 386.5 L555 387.7 L556 387.5 L557 385.2 L558 384.3 L559 382.6 L560 385.5 L561 386.7 L562 386.7 L563 387.5 L564 386.6 L565 385.7 L566 383.4 L567 383.6 L568 384.9 L569 387.3 L570 388.8 L571 390.4 L572 389.6 L573 388.7 L574 388.7 L575 386.9 L576 384.3 L577 375.7 L578 383.3 L579 384.5 L580 386.4 L581 388.0 L582 389.4 L583 389.4 L584 389.9 L585 391.0 L586 388.5 L587 391.5 L588 390.6 L589 388.7 L590 388.0 L591 387.1 L592 386.9 L593 387.5 L594 386.8 L595 386.6 L596 386.6 L597 388.8 L598 388.4 L599 388.1 L600 387.6 L601 383.4 L602 387.7 L603 388.8 L604 386.0 L605 385.6 L606 386.4 L607 386.2 L608 385.9 L609 384.2 L610 383.8 L611 383.7 L612 384.7 L613 385.7 L614 386.4 L615 386.4 L616 382.5 L617 386.4 L618 387.1 L619 387.4 L620 387.6 L621 384.3 L622 387.5 L623 388.2 L624 380.6 L625 383.7 L626 386.6 L627 385.9 L628 379.2 L629 385.2 L630 386.1 L631 384.7 L632 384.7 L633 385.0 L634 385.4 L635 387.2 L636 387.9 L637 384.6 L638 388.2 L639 383.5 L640 387.0 L641 388.6 L642 390.2 L643 390.3 L644 390.3 L645 380.9 L646 386.0 L647 386.6 L648 387.1 L649 385.1 L650 385.6 L651 377.0 L652 384.4 L653 383.1 L654 383.1 L655 381.8 L656 382.5 L657 383.8 L658 384.0 L659 384.0 L660 385.0 L661 385.7 L662 387.2 L663 388.2 L664 387.0 L665 386.4 L666 386.5 L667 387.6 L668 381.7 L669 384.5 L670 388.3 L671 387.9 L672 388.3 L673 387.5 L674 386.4 L675 385.6 L676 385.4 L677 386.1 L678 387.8 L679 389.4 L680 390.2 L681 389.4 L682 390.5 L683 390.5 L684 391.6 L685 391.4 L686 390.4 L687 390.3 L688 388.4 L689 387.2 L690 386.2 L691 384.9 L692 383.4 L693 383.2 L694 384.6 L695 384.3 L696 384.5 L697 384.5 L698 385.0 L699 384.8 L700 385.1 L701 386.6 L702 387.9 L703 387.0 L704 386.0 L705 386.4 L706 386.8 L707 387.3 L708 388.1 L709 387.3 L710 386.4 L711 385.3 L712 383.9 L713 380.3 L714 384.6 L715 386.0 L716 386.7 L717 387.9 L718 389.6 L719 382.9 L720 390.0 L721 388.7 L722 388.1 L723 388.8 L724 388.1 L725 388.4 L726 388.2 L727 388.7 L728 388.6 L729 389.3 L730 390.5 L731 390.1 L732 390.6 L733 390.3 L734 390.4 L735 388.4 L736 389.0 L737 388.0 L738 388.9 L739 389.2 L740 386.8 L741 389.6 L742 383.6 L743 388.5 L744 388.7 L745 389.5 L746 388.3 L747 388.0 L748 386.6 L749 385.8 L750 385.2 L751 385.5 L752 384.7 L753 385.3 L754 384.2 L755 383.9 L756 385.5 L757 386.8 L758 385.7 L759 386.3 L760 385.8 L761 385.9 L762 386.7 L763 385.6 L764 385.7 L765 385.9 L766 385.5 L767 385.9 L768 388.7 L769 388.7 L770 388.0 L771 388.0 L772 387.7 L773 386.6 L774 384.7 L775 384.5 L776 378.4 L777 384.6 L778 386.2 L779 387.1 L780 385.6 L781 385.6 L782 388.3 L783 389.8 L784 391.1 L785 385.0 L786 387.8 L787 382.5 L788 389.4 L789 390.2 L790 388.4 L791 388.6 L792 386.9 L793 387.3 L794 386.6 L795 387.4 L796 388.1 L797 386.6 L798 388.5 L799 389.3 L800 389.2 L801 389.7 L802 389.7 L803 389.4 L804 391.5 L805 392.3 L806 391.7 L807 390.9 L808 389.9 L809 388.6 L810 389.1 L811 386.3 L812 384.9 L813 384.5 L814 384.2 L815 385.1 L816 387.1 L817 388.8 L818 389.6 L819 389.1 L820 388.8 L821 389.0 L822 388.0 L823 388.4 L824 389.1 L825 389.5 L826 389.0 L827 387.2 L828 387.0 L829 386.3 L830 386.9 L831 386.6 L832 385.6 L833 385.5 L834 385.4 L835 386.5 L836 387.8 L837 387.6 L838 389.2 L839 390.1 L840 389.3 L841 388.7 L842 387.5 L843 385.9 L844 385.0 L845 386.8 L846 386.5 L847 388.2 L848 388.3 L849 383.0 L850 388.0 L851 388.8 L852 388.1 L853 385.5 L854 387.8 L855 386.6 L856 385.7 L857 387.0 L858 387.9 L859 388.9 L860 387.7 L861 387.5 L862 387.9 L863 386.4 L864 387.5 L865 386.9 L866 387.6 L867 389.9 L868 390.2 L869 389.6 L870 390.7 L871 390.8 L872 390.1 L873 390.2 L874 391.1 L875 390.9 L876 390.1 L877 389.4 L878 389.4 L879 386.5 L880 386.9 L881 387.1 L882 386.9 L883 386.7 L884 387.2 L885 386.4 L886 387.3 L887 388.2 L888 385.9 L889 387.0 L890 385.9 L891 385.9 L892 385.9 L893 385.2 L894 384.9 L895 385.6 L896 384.1 L897 385.0 L898 385.2 L899 386.0 L900 386.3 L901 387.2 L902 387.7 L903 387.5 L904 386.4 L905 386.0 L906 380.1 L907 385.0 L908 384.2 L909 376.7 L910 385.7 L911 386.4 L912 386.7 L913 386.9 L914 386.4 L915 387.7 L916 387.8 L917 387.6 L918 388.7 L919 387.4 L920 389.7 L921 391.0 L922 389.6 L923 391.5 L924 391.5 L925 391.2 L926 389.5 L927 389.6 L928 387.4 L929 386.1 L930 384.1 L931 387.2 L932 387.4 L933 383.1 L934 388.7 L935 388.6 L936 388.0 L937 387.7 L938 387.8 L939 388.5 L940 386.6 L941 386.9 L942 386.9 L943 387.8 L944 388.2 L945 387.7 L946 387.1 L947 386.0 L948 386.6 L949 386.3 L950 385.5 L951 385.9 L952 380.8 L953 384.0 L954 383.3 L955 384.5 L956 384.9 L957 388.1 L958 387.6 L959 387.7 L960 386.3 L961 385.2 L962 375.5 L963 384.4 L964 383.8 L965 385.4 L966 386.5 L967 386.5 L968 387.2 L969 387.1 L970 379.6 L971 388.2 L972 387.7 L973 381.2 L974 383.2 L975 387.7 L976 387.3 L977 389.0 L978 389.5 L979 391.0 L980 391.3 L981 391.6 L982 391.0 L983 390.1 L984 390.4 L985 389.7 L986 390.9 L987 391.0 L988 391.4 L989 391.3 L990 391.1 L991 389.6 L992 390.0 L993 389.4 L994 389.4 L995 388.4 L996 386.9 L997 387.3 L998 387.1 L999 387.0 L1000 385.6 L1001 385.7 L1002 385.3 L1003 386.8 L1004 387.3 L1005 387.5 L1006 389.0 L1007 389.7 L1008 390.7 L1009 390.7 L1010 389.6 L1011 388.1 L1012 388.9 L1013 388.9 L1014 382.3 L1015 387.3 L1016 387.8 L1017 387.9 L1018 387.7 L1019 388.1 L1020 388.8 L1021 388.4 L1022 389.1 L1023 388.8 L1024 387.4 L1025 387.9 L1026 385.4 L1027 387.0 L1028 387.3 L1029 386.9 L1030 388.0 L1031 386.5 L1032 385.7 L1033 384.4 L1034 384.3 L1035 384.3 L1036 382.7 L1037 381.6 L1038 382.6 L1039 383.1 L1040 384.9 L1041 386.0 L1042 387.0 L1043 387.9 L1044 387.4 L1045 388.7 L1046 389.2 L1047 382.7 L1048 389.2 L1049 384.3 L1050 387.0 L1051 387.4 L1052 388.0 L1053 387.8 L1054 389.6 L1055 389.9 L1056 389.3 L1057 386.7 L1058 387.3 L1059 386.6 L1060 386.5 L1061 381.5 L1062 386.7 L1063 384.9 L1064 385.0 L1065 384.2 L1066 384.9 L1067 385.4 L1068 380.5 L1069 385.2 L1070 385.1 L1071 385.7 L1072 387.5 L1073 383.0 L1074 388.1 L1075 388.7 L1076 388.1 L1077 387.6 L1078 387.5 L1079 386.5 L1080 379.8 L1081 383.0 L1082 382.2 L1083 383.1 L1084 382.6 L1085 377.7 L1086 386.3 L1087 387.5 L1088 389.0 L1089 390.0 L1090 389.9 L1091 387.7 L1092 386.9 L1093 387.0 L1094 387.0 L1095 387.7 L1096 382.7 L1097 386.9 L1098 386.7 L1099 386.3 L1100 386.5 L1101 386.1 L1102 386.2 L1103 388.2 L1104 389.3 L1105 389.5 L1106 387.6 L1107 387.3 L1108 388.3 L1109 387.3 L1110 387.6 L1111 387.7 L1112 389.3 L1113 389.5 L1114 389.8 L1115 390.2 L1116 390.4 L1117 389.0 L1118 388.2 L1119 386.6 L1120 384.0 L1121 383.3 L1122 383.6 L1123 377.2 L1124 383.3 L1125 384.3 L1126 376.3 L1127 385.0 L1128 385.5 L1129 387.2 L1130 386.7 L1131 387.7 L1132 386.7 L1133 386.6 L1134 386.4 L1135 385.5 L1136 386.4 L1137 386.8 L1138 382.4 L1139 385.0 L1140 383.5 L1141 382.9 L1142 382.5 L1143 376.8 L1144 384.1 L1145 384.7 L1146 384.8 L1147 384.3 L1148 377.9 L1149 387.4 L1150 386.6 L1151 386.2 L1152 384.7 L1153 384.4 L1154 385.8 L1155 385.6 L1156 386.4 L1157 386.0 L1158 386.0 L1159 385.6 L1160 386.0 L1161 386.4 L1162 387.2 L1163 385.8 L1164 384.8 L1165 384.1 L1166 384.5 L1167 381.5 L1168 375.0 L1169 368.5 L1170 362.0 L1171 368.5 L1172 375.0 L1173 381.5 L1174 387.2 L1175 387.4 L1176 387.1 L1177 385.7 L1178 386.1 L1179 385.9 L1180 384.7 L1181 385.6 L1182 386.3 L1183 384.8 L1184 385.2 L1185 380.2 L1186 384.2 L1187 384.6 L1188 385.3 L1189 386.2 L1190 386.1 L1191 385.0 L1192 384.6 L1193 385.2 L1194 387.5 L1195 386.5 L1196 388.0 L1197 388.0 L1198 388.3 L1199 388.6 L1200 387.7 L1201 387.5 L1202 386.0 L1203 385.4 L1204 386.5 L1205 385.3 L1206 386.4 L1207 379.4 L1208 388.2 L1209 389.6 L1210 389.1 L1211 389.0 L1212 388.1 L1213 387.2 L1214 386.4 L1215 386.8 L1216 381.0 L1217 387.0 L1218 385.5 L1219 384.9 L1220 384.6 L1221 384.7 L1222 387.2 L1223 386.4 L1224 378.6 L1225 386.2 L1226 378.8 L1227 386.4 L1228 384.7 L1229 386.0 L1230 386.1 L1231 387.3 L1232 387.5 L1233 386.9 L1234 387.7 L1235 388.3 L1236 388.8 L1237 389.4 L1238 389.8 L1239 391.4 L1240 392.3 L1241 390.7 L1242 389.5 L1243 388.1 L1244 380.4 L1245 389.1 L1246 387.2 L1247 379.3 L1248 384.3 L1249 385.4 L1250 385.8 L1251 386.9 L1252 387.2 L1253 387.7 L1254 386.3 L1255 385.4 L1256 385.3 L1257 386.8 L1258 386.9 L1259 387.4 L1260 387.1 L1261 388.5 L1262 387.6 L1263 383.7 L1264 386.8 L1265 386.0 L1266 386.0 L1267 386.1 L1268 385.7 L1269 385.7 L1270 385.3 L1271 385.6 L1272 386.0 L1273 385.4 L1274 386.2 L1275 385.1 L1276 384.7 L1277 384.1 L1278 384.1 L1279 383.8 L1280 383.8 L1281 385.2 L1282 385.5 L1283 384.8 L1284 386.6 L1285 386.9 L1286 387.0 L1287 386.6 L1288 387.5 L1289 381.8 L1290 382.2 L1291 389.9 L1292 390.2 L1293 390.3 L1294 390.9 L1295 387.1 L1296 390.0 L1297 389.6 L1298 389.5 L1299 390.3 L1300 389.7 L1301 390.2 L1302 389.3 L1303 388.8 L1304 388.2 L1305 387.6 L1306 387.7 L1307 388.8 L1308 387.0 L1309 387.1 L1310 382.0 L1311 376.0 L1312 370.0 L1313 376.0 L1314 382.0 L1315 389.4 L1316 385.5 L1317 390.7 L1318 390.4 L1319 389.4 L1320 388.6 L1321 387.5 L1322 386.8 L1323 388.3 L1324 387.2 L1325 387.7 L1326 388.6 L1327 387.1 L1328 390.0 L1329 388.6 L1330 387.8 L1331 388.3 L1332 387.9 L1333 387.5 L1334 386.4 L1335 385.1 L1336 385.6 L1337 386.3 L1338 386.5 L1339 387.1 L1340 386.4 L1341 386.3 L1342 385.9 L1343 388.0 L1344 387.2 L1345 387.8 L1346 387.1 L1347 386.6 L1348 386.4 L1349 386.2 L1350 387.3 L1351 388.0 L1352 389.4 L1353 389.6 L1354 390.1 L1355 390.6 L1356 390.4 L1357 388.5 L1358 388.6 L1359 383.6 L1360 388.3 L1361 385.8 L1362 380.2 L1363 387.3 L1364 388.8 L1365 389.4 L1366 388.8 L1367 389.0 L1368 389.3 L1369 390.1 L1370 389.8 L1371 390.2 L1372 390.2 L1373 390.2 L1374 391.1 L1375 392.2 L1376 387.9 L1377 386.5 L1378 390.4 L1379 389.0 L1380 388.3 L1381 387.6 L1382 386.0 L1383 385.6 L1384 384.8 L1385 384.6 L1386 386.6 L1387 387.2 L1388 388.4 L1389 388.3 L1390 386.7 L1391 385.8 L1392 386.4 L1393 387.7 L1394 388.9 L1395 387.8 L1396 387.0 L1397 386.0 L1398 385.6 L1399 386.1 L1400 387.3 L1401 388.6 L1402 388.7 L1403 388.0 L1404 388.0 L1405 384.7 L1406 381.3 L1407 378.0 L1408 381.3 L1409 384.7 L1410 384.5 L1411 379.1 L1412 386.1 L1413 385.9 L1414 386.8 L1415 387.2 L1416 380.7 L1417 387.7 L1418 387.4 L1419 386.0 L1420 380.4 L1421 385.8 L1422 385.8 L1423 386.0 L1424 386.7 L1425 383.6 L1426 385.6 L1427 385.1 L1428 386.2 L1429 386.0 L1430 385.4 L1431 386.3 L1432 387.2 L1433 387.2 L1434 388.7 L1435 388.6 L1436 388.5 L1437 388.9 L1438 388.2 L1439 389.2 L1440 389.5 L1441 388.4 L1442 388.7 L1443 388.5 L1444 388.2 L1445 386.8 L1446 386.6 L1447 388.5 L1448 388.9 L1449 388.5 L1450 388.2 L1451 387.4 L1452 382.2 L1453 388.6 L1454 388.2 L1455 386.8 L1456 387.4 L1457 380.9 L1458 388.1 L1459 387.0 L1460 386.9 L1461 386.8 L1462 385.9 L1463 385.3 L1464 386.8 L1465 385.6 L1466 385.2 L1467 384.8 L1468 385.6 L1469 385.6 L1470 385.7 L1471 386.9 L1472 388.2 L1473 388.4 L1474 388.1 L1475 386.9 L1476 388.2 L1477 389.0 L1478 387.6 L1479 389.5 L1480 389.6 L1481 389.1 L1482 388.7 L1483 387.7 L1484 387.7 L1485 386.8 L1486 387.7 L1487 380.7 L1488 386.3 L1489 387.3 L1490 387.2 L1491 386.9 L1492 388.9 L1493 383.0 L1494 389.4 L1495 391.4 L1496 390.2 L1497 389.8 L1498 389.9 L1499 387.3 L1500 387.4 L1501 388.1 L1502 387.4 L1503 388.3 L1504 388.4 L1505 380.9 L1506 386.8 L1507 385.4 L1508 383.6 L1509 385.1 L1510 385.3 L1511 386.2 L1512 386.6 L1513 385.5 L1514 387.0 L1515 378.1 L1516 385.2 L1517 385.5 L1518 385.4 L1519 384.8 L1520 385.6 L1521 386.2 L1522 386.3 L1523 387.8 L1524 388.2 L1525 387.4 L1526 385.9 L1527 386.4 L1528 382.8 L1529 386.6 L1530 386.1 L1531 388.0 L1532 381.8 L1533 388.4 L1534 389.5 L1535 389.3 L1536 390.3 L1537 388.9 L1538 389.5 L1539 388.6 L1540 388.2 L1541 387.8 L1542 387.4 L1543 388.7 L1544 388.0 L1545 381.2 L1546 386.7 L1547 385.6 L1548 387.1 L1549 386.5 L1550 387.2 L1551 388.5 L1552 388.9 L1553 388.0 L1554 388.9 L1555 389.3 L1556 389.1 L1557 389.1 L1558 388.8 L1559 388.5 L1560 388.4 L1561 389.0 L1562 386.1 L1563 389.2 L1564 390.0 L1565 388.6 L1566 388.5 L1567 388.1 L1568 388.0 L1569 386.8 L1570 387.8 L1571 388.1 L1572 387.7 L1573 388.4 L1574 385.7 L1575 385.2 L1576 383.8 L1577 384.1 L1578 383.5 L1579 382.9 L1580 382.5 L1581 383.5 L1582 379.0 L1583 385.2 L1584 387.4 L1585 386.5 L1586 380.6 L1587 386.6 L1588 386.8 L1589 388.8 L1590 386.6 L1591 386.0 L1592 385.9 L1593 385.7 L1594 384.9 L1595 385.5 L1596 387.3 L1597 389.0 L1598 388.5 L1599 387.7 L1600 388.3 L1601 387.7 L1602 387.0 L1603 387.1 L1604 386.3 L1605 388.8 L1606 390.6 L1607 392.3 L1608 392.0 L1609 392.1 L1610 390.2 L1611 388.8 L1612 387.3 L1613 387.8 L1614 390.3 L1615 390.1 L1616 390.8 L1617 390.6 L1618 391.0 L1619 392.0 L1620 392.6 L1621 391.9 L1622 393.1 L1623 391.8 L1624 391.4 L1625 389.1 L1626 388.9 L1627 385.4 L1628 389.4 L1629 389.0 L1630 383.7 L1631 388.8 L1632 386.6 L1633 380.5 L1634 387.9 L1635 382.6 L1636 387.2 L1637 386.5 L1638 385.7 L1639 385.0 L1640 386.7 L1641 386.3 L1642 387.6 L1643 387.2 L1644 386.7 L1645 385.8 L1646 385.0 L1647 386.7 L1648 385.2 L1649 385.9 L1650 384.8 L1651 384.5 L1652 383.9 L1653 384.6 L1654 383.4 L1655 385.5 L1656 386.1 L1657 385.8 L1658 384.4 L1659 384.6 L1660 384.7 L1661 384.1 L1662 385.4 L1663 385.3 L1664 387.9 L1665 388.3 L1666 389.2 L1667 389.4 L1668 388.9 L1669 389.4 L1670 388.1 L1671 388.2 L1672 386.2 L1673 387.1 L1674 387.4 L1675 385.8 L1676 385.7 L1677 384.6 L1678 384.0 L1679 384.3 L1680 385.5 L1681 385.3 L1682 384.9 L1683 383.5 L1684 382.4 L1685 382.0 L1686 383.2 L1687 382.8 L1688 386.7 L1689 386.4 L1690 386.8 L1691 385.0 L1692 382.0 L1693 379.0 L1694 382.0 L1695 385.0 L1696 386.2 L1697 385.4 L1698 386.6 L1699 381.8 L1700 385.5 L1701 385.6 L1702 384.9 L1703 384.1 L1704 382.6 L1705 383.0 L1706 382.7 L1707 382.9 L1708 385.2 L1709 385.6 L1710 382.5 L1711 388.0 L1712 388.2 L1713 388.9 L1714 388.8 L1715 389.7 L1716 390.2 L1717 385.5 L1718 390.6 L1719 390.3 L1720 389.8 L1721 390.3 L1722 384.0 L1723 390.7 L1724 390.4 L1725 390.3 L1726 390.5 L1727 388.5 L1728 387.8 L1729 382.5 L1730 387.5 L1731 380.0 L1732 387.3 L1733 386.0 L1734 387.3 L1735 385.1 L1736 385.1 L1737 382.2 L1738 384.1 L1739 383.9 L1740 384.6 L1741 376.4 L1742 383.9 L1743 383.7 L1744 383.9 L1745 383.9 L1746 384.9 L1747 379.5 L1748 385.0 L1749 384.5 L1750 385.2 L1751 384.9 L1752 384.9 L1753 385.9 L1754 387.4 L1755 386.8 L1756 387.8 L1757 389.1 L1758 390.1 L1759 389.2 L1760 387.8 L1761 388.6 L1762 388.8 L1763 389.8 L1764 383.6 L1765 382.2 L1766 388.1 L1767 386.9 L1768 385.6 L1769 379.7 L1770 385.6 L1771 386.2 L1772 386.7 L1773 386.7 L1774 387.2 L1775 388.3 L1776 389.5 L1777 388.1 L1778 387.7 L1779 387.0 L1780 384.3 L1781 387.5 L1782 387.5 L1783 386.0 L1784 386.6 L1785 386.2 L1786 387.1 L1787 384.3 L1788 380.7 L1789 377.0 L1790 380.7 L1791 384.3 L1792 390.4 L1793 390.0 L1794 390.2 L1795 390.2 L1796 389.1 L1797 388.0 L1798 386.7 L1799 388.5 L1800 381.8 L1801 388.4 L1802 387.4 L1803 386.5 L1804 386.8 L1805 386.3 L1806 385.0 L1807 384.3 L1808 384.0 L1809 384.8 L1810 383.7 L1811 383.4 L1812 384.6 L1813 384.3 L1814 384.9 L1815 386.4 L1816 386.8 L1817 387.9 L1818 388.8 L1819 389.7 L1820 390.8 L1821 390.2 L1822 390.1 L1823 390.6 L1824 390.0 L1825 390.9 L1826 390.3 L1827 390.0 L1828 389.5 L1829 389.8 L1830 388.3 L1831 388.3 L1832 387.8 L1833 388.7 L1834 383.2 L1835 390.2 L1836 389.1 L1837 388.8 L1838 389.0 L1839 384.4 L1840 388.3 L1841 388.9 L1842 388.7 L1843 388.8 L1844 388.5 L1845 387.6 L1846 387.3 L1847 388.7 L1848 387.2 L1849 386.6 L1850 386.4 L1851 385.4 L1852 385.4 L1853 383.8 L1854 385.3 L1855 384.5 L1856 384.6 L1857 386.1 L1858 381.4 L1859 385.8 L1860 386.0 L1861 386.1 L1862 387.7 L1863 387.7 L1864 388.3 L1865 388.8 L1866 389.8 L1867 388.7 L1868 390.6 L1869 390.2 L1870 390.3 L1871 387.2 L1872 391.4 L1873 391.3 L1874 390.8 L1875 391.2 L1876 391.3 L1877 390.1 L1878 388.1 L1879 388.1 L1880 388.9" fill="none" stroke="#eef2f8" stroke-width="1.1"/></svg>
<div class="a" style="left:513px;top:409px;width:1315px;height:1px;background:repeating-linear-gradient(90deg,#5050c8 0 1px,transparent 1px 4px)"></div>
<div class="a" style="left:1171px;top:140px;width:1px;height:272px;background:#7cc87c"></div>
<div class="a" style="left:1213px;top:140px;width:1px;height:272px;background:#7cc87c"></div>
<div class="a" style="left:1171px;top:140px;width:43px;height:7px;background:linear-gradient(90deg,#10c010,#70ff70 50%,#10c010)"></div>
<div class="a" style="left:1172px;top:175px;width:41px;height:1.5px;background:#4cc04c"></div>
<div class="a" style="left:1184.5px;top:149px;width:15.5px;height:15px;background:#004800;border-radius:2px"></div>
<div class="t" style="left:1182.0px;top:151.5px;width:20px;text-align:center;font-size:10px;font-weight:bold;color:#d8f8c8">1</div>
<div class="a" style="left:1172px;top:405px;width:41px;height:6px;background:linear-gradient(90deg,#30a030,#a0e0a0 50%,#30a030)"></div>
<div class="t" style="left:465px;top:155.3px;font-size:11px;color:#e8e8e8;transform:scaleX(.92);transform-origin:left">+40</div>
<div class="t" style="left:1816px;top:155.3px;width:60px;text-align:right;font-size:11px;color:#e8e8e8;transform:scaleX(.92);transform-origin:right">+40</div>
<div class="t" style="left:465px;top:170.6px;font-size:11px;color:#e8e8e8;transform:scaleX(.92);transform-origin:left">+35</div>
<div class="t" style="left:1816px;top:170.6px;width:60px;text-align:right;font-size:11px;color:#e8e8e8;transform:scaleX(.92);transform-origin:right">+35</div>
<div class="t" style="left:465px;top:186.3px;font-size:11px;color:#e8e8e8;transform:scaleX(.92);transform-origin:left">+30</div>
<div class="t" style="left:1816px;top:186.3px;width:60px;text-align:right;font-size:11px;color:#e8e8e8;transform:scaleX(.92);transform-origin:right">+30</div>
<div class="t" style="left:465px;top:201.5px;font-size:11px;color:#e8e8e8;transform:scaleX(.92);transform-origin:left">+25</div>
<div class="t" style="left:1816px;top:201.5px;width:60px;text-align:right;font-size:11px;color:#e8e8e8;transform:scaleX(.92);transform-origin:right">+25</div>
<div class="t" style="left:465px;top:216.7px;font-size:11px;color:#e8e8e8;transform:scaleX(.92);transform-origin:left">+20</div>
<div class="t" style="left:1816px;top:216.7px;width:60px;text-align:right;font-size:11px;color:#e8e8e8;transform:scaleX(.92);transform-origin:right">+20</div>
<div class="t" style="left:465px;top:231.7px;font-size:11px;color:#e8e8e8;transform:scaleX(.92);transform-origin:left">+15</div>
<div class="t" style="left:1816px;top:231.7px;width:60px;text-align:right;font-size:11px;color:#e8e8e8;transform:scaleX(.92);transform-origin:right">+15</div>
<div class="t" style="left:465px;top:246.6px;font-size:11px;color:#e8e8e8;transform:scaleX(.92);transform-origin:left">+10</div>
<div class="t" style="left:1816px;top:246.6px;width:60px;text-align:right;font-size:11px;color:#e8e8e8;transform:scaleX(.92);transform-origin:right">+10</div>
<div class="t" style="left:465px;top:262.5px;font-size:11px;color:#e8e8e8;transform:scaleX(.92);transform-origin:left">+5</div>
<div class="t" style="left:1816px;top:262.5px;width:60px;text-align:right;font-size:11px;color:#e8e8e8;transform:scaleX(.92);transform-origin:right">+5</div>
<div class="t" style="left:465px;top:277.4px;font-size:11px;color:#e8e8e8;transform:scaleX(.92);transform-origin:left">S9</div>
<div class="t" style="left:1816px;top:277.4px;width:60px;text-align:right;font-size:11px;color:#e8e8e8;transform:scaleX(.92);transform-origin:right">S9</div>
<div class="t" style="left:465px;top:295.4px;font-size:11px;color:#e8e8e8;transform:scaleX(.92);transform-origin:left">S8</div>
<div class="t" style="left:1816px;top:295.4px;width:60px;text-align:right;font-size:11px;color:#e8e8e8;transform:scaleX(.92);transform-origin:right">S8</div>
<div class="t" style="left:465px;top:313.3px;font-size:11px;color:#e8e8e8;transform:scaleX(.92);transform-origin:left">S7</div>
<div class="t" style="left:1816px;top:313.3px;width:60px;text-align:right;font-size:11px;color:#e8e8e8;transform:scaleX(.92);transform-origin:right">S7</div>
<div class="t" style="left:465px;top:331.2px;font-size:11px;color:#e8e8e8;transform:scaleX(.92);transform-origin:left">S6</div>
<div class="t" style="left:1816px;top:331.2px;width:60px;text-align:right;font-size:11px;color:#e8e8e8;transform:scaleX(.92);transform-origin:right">S6</div>
<div class="t" style="left:465px;top:350.1px;font-size:11px;color:#e8e8e8;transform:scaleX(.92);transform-origin:left">S5</div>
<div class="t" style="left:1816px;top:350.1px;width:60px;text-align:right;font-size:11px;color:#e8e8e8;transform:scaleX(.92);transform-origin:right">S5</div>
<div class="t" style="left:465px;top:368.0px;font-size:11px;color:#e8e8e8;transform:scaleX(.92);transform-origin:left">S4</div>
<div class="t" style="left:1816px;top:368.0px;width:60px;text-align:right;font-size:11px;color:#e8e8e8;transform:scaleX(.92);transform-origin:right">S4</div>
<div class="t" style="left:465px;top:386.3px;font-size:11px;color:#7080d0;transform:scaleX(.92);transform-origin:left">S3</div>
<div class="t" style="left:1816px;top:386.3px;width:60px;text-align:right;font-size:11px;color:#7080d0;transform:scaleX(.92);transform-origin:right">S3</div>
<div class="t" style="left:465px;top:403.8px;font-size:11px;color:#7080d0;transform:scaleX(.92);transform-origin:left">S2</div>
<div class="t" style="left:1816px;top:403.8px;width:60px;text-align:right;font-size:11px;color:#7080d0;transform:scaleX(.92);transform-origin:right">S2</div>
<div class="t" style="left:465px;top:421.8px;font-size:11px;color:#2a8a2a;transform:scaleX(.92);transform-origin:left">S1</div>
<div class="t" style="left:1816px;top:421.8px;width:60px;text-align:right;font-size:11px;color:#2a8a2a;transform:scaleX(.92);transform-origin:right">S1</div>
<div class="a" style="left:461px;top:413px;width:1419px;height:39px;background:#007000"></div>
<div class="t" style="left:465px;top:421.8px;font-size:11px;color:#2a8a2a;transform:scaleX(.92);transform-origin:left">S1</div>
<div class="t" style="left:1816px;top:421.8px;width:60px;text-align:right;font-size:11px;color:#2a8a2a;transform:scaleX(.92);transform-origin:right">S1</div>
<div class="t" style="left:1020.0px;top:426.5px;width:300px;text-align:center;font-size:15px;color:#d8f0d8;transform:scaleX(.92)">20M Ham Phone and Image</div>
<div class="a" style="left:461px;top:452px;width:1419px;height:1px;background:#8ccf8c"></div>
<div class="a" style="left:461px;top:453px;width:1419px;height:10px;background:linear-gradient(#707070,#262626)"></div>
<div class="a" style="left:461px;top:463px;width:1419px;height:10px;background:#000"></div>
<svg class="a" style="left:0px;top:0px;" width="1920" height="1040" viewBox="0 0 1920 1040"><rect x="473.5" y="454" width="1.5" height="3.5" fill="#a8a8a8"/><rect x="487.6" y="454" width="1.5" height="3.5" fill="#a8a8a8"/><rect x="501.8" y="454" width="1.5" height="3.5" fill="#a8a8a8"/><rect x="516.1" y="454" width="1.5" height="3.5" fill="#a8a8a8"/><rect x="530.2" y="454" width="1.5" height="3.5" fill="#a8a8a8"/><rect x="544.4" y="454" width="1.5" height="3.5" fill="#a8a8a8"/><rect x="558.7" y="454" width="1.5" height="3.5" fill="#a8a8a8"/><rect x="572.9" y="454" width="1.5" height="3.5" fill="#a8a8a8"/><rect x="587.0" y="454" width="1.5" height="3.5" fill="#a8a8a8"/><rect x="601.3" y="454" width="1.5" height="3.5" fill="#a8a8a8"/><rect x="615.5" y="454" width="1.5" height="3.5" fill="#a8a8a8"/><rect x="629.6" y="454" width="1.5" height="3.5" fill="#a8a8a8"/><rect x="643.9" y="454" width="1.5" height="3.5" fill="#a8a8a8"/><rect x="658.1" y="454" width="1.5" height="3.5" fill="#a8a8a8"/><rect x="672.2" y="454" width="1.5" height="3.5" fill="#a8a8a8"/><rect x="686.5" y="454" width="1.5" height="3.5" fill="#a8a8a8"/><rect x="700.7" y="454" width="1.5" height="3.5" fill="#a8a8a8"/><rect x="714.8" y="454" width="1.5" height="3.5" fill="#a8a8a8"/><rect x="729.0" y="454" width="1.5" height="3.5" fill="#a8a8a8"/><rect x="743.3" y="454" width="1.5" height="3.5" fill="#a8a8a8"/><rect x="757.5" y="454" width="1.5" height="3.5" fill="#a8a8a8"/><rect x="771.6" y="454" width="1.5" height="3.5" fill="#a8a8a8"/><rect x="785.9" y="454" width="1.5" height="3.5" fill="#a8a8a8"/><rect x="800.1" y="454" width="1.5" height="3.5" fill="#a8a8a8"/><rect x="814.2" y="454" width="1.5" height="3.5" fill="#a8a8a8"/><rect x="828.5" y="454" width="1.5" height="3.5" fill="#a8a8a8"/><rect x="842.7" y="454" width="1.5" height="3.5" fill="#a8a8a8"/><rect x="856.8" y="454" width="1.5" height="3.5" fill="#a8a8a8"/><rect x="871.1" y="454" width="1.5" height="3.5" fill="#a8a8a8"/><rect x="885.3" y="454" width="1.5" height="3.5" fill="#a8a8a8"/><rect x="899.4" y="454" width="1.5" height="3.5" fill="#a8a8a8"/><rect x="913.7" y="454" width="1.5" height="3.5" fill="#a8a8a8"/><rect x="927.9" y="454" width="1.5" height="3.5" fill="#a8a8a8"/><rect x="942.0" y="454" width="1.5" height="3.5" fill="#a8a8a8"/><rect x="956.2" y="454" width="1.5" height="3.5" fill="#a8a8a8"/><rect x="970.5" y="454" width="1.5" height="3.5" fill="#a8a8a8"/><rect x="984.7" y="454" width="1.5" height="3.5" fill="#a8a8a8"/><rect x="998.8" y="454" width="1.5" height="3.5" fill="#a8a8a8"/><rect x="1013.1" y="454" width="1.5" height="3.5" fill="#a8a8a8"/><rect x="1027.3" y="454" width="1.5" height="3.5" fill="#a8a8a8"/><rect x="1041.4" y="454" width="1.5" height="3.5" fill="#a8a8a8"/><rect x="1055.7" y="454" width="1.5" height="3.5" fill="#a8a8a8"/><rect x="1069.9" y="454" width="1.5" height="3.5" fill="#a8a8a8"/><rect x="1084.0" y="454" width="1.5" height="3.5" fill="#a8a8a8"/><rect x="1098.3" y="454" width="1.5" height="3.5" fill="#a8a8a8"/><rect x="1112.5" y="454" width="1.5" height="3.5" fill="#a8a8a8"/><rect x="1126.6" y="454" width="1.5" height="3.5" fill="#a8a8a8"/><rect x="1140.9" y="454" width="1.5" height="3.5" fill="#a8a8a8"/><rect x="1155.1" y="454" width="1.5" height="3.5" fill="#a8a8a8"/><rect x="1169.2" y="454" width="1.5" height="3.5" fill="#a8a8a8"/><rect x="1183.4" y="454" width="1.5" height="3.5" fill="#a8a8a8"/><rect x="1197.7" y="454" width="1.5" height="3.5" fill="#a8a8a8"/><rect x="1211.9" y="454" width="1.5" height="3.5" fill="#a8a8a8"/><rect x="1226.0" y="454" width="1.5" height="3.5" fill="#a8a8a8"/><rect x="1240.3" y="454" width="1.5" height="3.5" fill="#a8a8a8"/><rect x="1254.5" y="454" width="1.5" height="3.5" fill="#a8a8a8"/><rect x="1268.6" y="454" width="1.5" height="3.5" fill="#a8a8a8"/><rect x="1282.9" y="454" width="1.5" height="3.5" fill="#a8a8a8"/><rect x="1297.1" y="454" width="1.5" height="3.5" fill="#a8a8a8"/><rect x="1311.2" y="454" width="1.5" height="3.5" fill="#a8a8a8"/><rect x="1325.5" y="454" width="1.5" height="3.5" fill="#a8a8a8"/><rect x="1339.7" y="454" width="1.5" height="3.5" fill="#a8a8a8"/><rect x="1353.8" y="454" width="1.5" height="3.5" fill="#a8a8a8"/><rect x="1368.1" y="454" width="1.5" height="3.5" fill="#a8a8a8"/><rect x="1382.3" y="454" width="1.5" height="3.5" fill="#a8a8a8"/><rect x="1396.4" y="454" width="1.5" height="3.5" fill="#a8a8a8"/><rect x="1410.6" y="454" width="1.5" height="3.5" fill="#a8a8a8"/><rect x="1424.9" y="454" width="1.5" height="3.5" fill="#a8a8a8"/><rect x="1439.1" y="454" width="1.5" height="3.5" fill="#a8a8a8"/><rect x="1453.2" y="454" width="1.5" height="3.5" fill="#a8a8a8"/><rect x="1467.5" y="454" width="1.5" height="3.5" fill="#a8a8a8"/><rect x="1481.7" y="454" width="1.5" height="3.5" fill="#a8a8a8"/><rect x="1495.8" y="454" width="1.5" height="3.5" fill="#a8a8a8"/><rect x="1510.1" y="454" width="1.5" height="3.5" fill="#a8a8a8"/><rect x="1524.3" y="454" width="1.5" height="3.5" fill="#a8a8a8"/><rect x="1538.4" y="454" width="1.5" height="3.5" fill="#a8a8a8"/><rect x="1552.7" y="454" width="1.5" height="3.5" fill="#a8a8a8"/><rect x="1566.9" y="454" width="1.5" height="3.5" fill="#a8a8a8"/><rect x="1581.0" y="454" width="1.5" height="3.5" fill="#a8a8a8"/><rect x="1595.3" y="454" width="1.5" height="3.5" fill="#a8a8a8"/><rect x="1609.5" y="454" width="1.5" height="3.5" fill="#a8a8a8"/><rect x="1623.6" y="454" width="1.5" height="3.5" fill="#a8a8a8"/><rect x="1637.8" y="454" width="1.5" height="3.5" fill="#a8a8a8"/><rect x="1652.1" y="454" width="1.5" height="3.5" fill="#a8a8a8"/><rect x="1666.3" y="454" width="1.5" height="3.5" fill="#a8a8a8"/><rect x="1680.4" y="454" width="1.5" height="3.5" fill="#a8a8a8"/><rect x="1694.7" y="454" width="1.5" height="3.5" fill="#a8a8a8"/><rect x="1708.9" y="454" width="1.5" height="3.5" fill="#a8a8a8"/><rect x="1723.0" y="454" width="1.5" height="3.5" fill="#a8a8a8"/><rect x="1737.3" y="454" width="1.5" height="3.5" fill="#a8a8a8"/><rect x="1751.5" y="454" width="1.5" height="3.5" fill="#a8a8a8"/><rect x="1765.6" y="454" width="1.5" height="3.5" fill="#a8a8a8"/><rect x="1779.9" y="454" width="1.5" height="3.5" fill="#a8a8a8"/><rect x="1794.1" y="454" width="1.5" height="3.5" fill="#a8a8a8"/><rect x="1808.2" y="454" width="1.5" height="3.5" fill="#a8a8a8"/><rect x="1822.5" y="454" width="1.5" height="3.5" fill="#a8a8a8"/><rect x="1836.7" y="454" width="1.5" height="3.5" fill="#a8a8a8"/><rect x="1850.8" y="454" width="1.5" height="3.5" fill="#a8a8a8"/><rect x="1865.0" y="454" width="1.5" height="3.5" fill="#a8a8a8"/></svg>
<div class="t" style="left:501.0px;top:461px;width:60px;text-align:center;font-size:9.9px;color:#f4f4f4">14.160</div>
<div class="t" style="left:643.0px;top:461px;width:60px;text-align:center;font-size:9.9px;color:#f4f4f4">14.170</div>
<div class="t" style="left:785.0px;top:461px;width:60px;text-align:center;font-size:9.9px;color:#f4f4f4">14.180</div>
<div class="t" style="left:927.0px;top:461px;width:60px;text-align:center;font-size:9.9px;color:#f4f4f4">14.190</div>
<div class="t" style="left:1069.0px;top:461px;width:60px;text-align:center;font-size:9.9px;color:#f4f4f4">14.200</div>
<div class="t" style="left:1211.0px;top:461px;width:60px;text-align:center;font-size:9.9px;color:#f4f4f4">14.210</div>
<div class="t" style="left:1353.0px;top:461px;width:60px;text-align:center;font-size:9.9px;color:#f4f4f4">14.220</div>
<div class="t" style="left:1495.0px;top:461px;width:60px;text-align:center;font-size:9.9px;color:#f4f4f4">14.230</div>
<div class="t" style="left:1637.0px;top:461px;width:60px;text-align:center;font-size:9.9px;color:#f4f4f4">14.240</div>
<div class="t" style="left:1779.0px;top:461px;width:60px;text-align:center;font-size:9.9px;color:#f4f4f4">14.250</div>
<div class="a" style="left:1524.5px;top:168px;width:1.3px;height:234px;background:#d8d860"></div>
<svg class="a" style="left:1519px;top:400px;" width="12" height="12" viewBox="0 0 12 12"><path d="M0 0h12l-6 12z" fill="#909090"/></svg>
<div class="a" style="left:1609.5px;top:232px;width:1.3px;height:170px;background:#d8d860"></div>
<svg class="a" style="left:1604px;top:400px;" width="12" height="12" viewBox="0 0 12 12"><path d="M0 0h12l-6 12z" fill="#909090"/></svg>
<div class="a" style="left:1527px;top:163px;width:33px;height:15px;background:#060606"></div>
<div class="t" style="left:1529.5px;top:164.5px;font-size:12px;color:#e0e070;transform:scaleX(.86);transform-origin:left">SSTV</div>
<div class="a" style="left:1527px;top:195px;width:80px;height:16px;background:#060606"></div>
<svg class="a" style="left:1530px;top:198px;" width="9" height="9" viewBox="0 0 9 9"><rect x=".5" y=".5" width="8" height="8" fill="none" stroke="#e0e070"/><path d="M1 1l7 7M8 1l-7 7" stroke="#e0e070"/><circle cx="4.5" cy="4.5" r="2.4" fill="none" stroke="#e0e070"/></svg>
<div class="t" style="left:1542.5px;top:196.5px;font-size:12px;color:#e0e070;transform:scaleX(.87);transform-origin:left">SSTV 14.230</div>
<div class="a" style="left:1612px;top:227px;width:135px;height:17px;background:#060606"></div>
<div class="t" style="left:1614px;top:228.5px;font-size:12px;color:#e0e070;transform:scaleX(.91);transform-origin:left">FreeDV Calling Frequency</div>
<div class="a" style="left:461px;top:473px;width:1419px;height:6px;background:#f0f0f0"></div>
<div class="a" style="left:1138.5px;top:475px;width:63px;height:2px;background:repeating-linear-gradient(90deg,#5a5a5a 0 2px,transparent 2px 4px)"></div>
<div class="a" style="left:461px;top:479px;width:1419px;height:509px;background:#000"></div>
<div class="a" style="left:1172px;top:480px;width:1px;height:505px;background:repeating-linear-gradient(#8a8a8a 0 2px,transparent 2px 5.5px)"></div>
<div class="a" style="left:1213px;top:480px;width:1px;height:505px;background:repeating-linear-gradient(#8a8a8a 0 2px,transparent 2px 5.5px)"></div>
<div class="t" style="left:553px;top:922.5px;font-size:6.8px;font-weight:bold;color:#e0e8c8">UTC</div>
<div class="t m" style="left:485px;top:932.5px;font-size:36.2px;color:#fff;transform:scaleY(1.06);transform-origin:top">00:04</div>
<div class="t m" style="left:596.5px;top:942.5px;font-size:20.3px;color:#fff;transform:scaleY(1.12);transform-origin:top">:33</div>
<div class="a" style="left:461px;top:988px;width:1419px;height:27px;background:#f0f0f0"></div>
<div class="a" style="left:488px;top:988px;width:1274px;height:1px;background:#9a9a9a"></div>
<div class="a" style="left:488px;top:989px;width:1274px;height:13px;background:linear-gradient(#484848,#1c1c1c)"></div>
<div class="a" style="left:488px;top:1002px;width:1274px;height:13px;background:#000"></div>
<div class="a" style="left:807px;top:989px;width:636px;height:26px;background:radial-gradient(ellipse 55% 70% at 50% 100%,#9a9a12 0%,rgba(120,120,16,.75) 35%,rgba(60,60,20,0) 100%),linear-gradient(#5c5c5c 0%,#3c3c3c 50%,#2e2e2e 100%)"></div>
<div class="a" style="left:806px;top:989px;width:1.5px;height:26px;background:#d8d8d8"></div>
<div class="a" style="left:1442px;top:989px;width:1.5px;height:26px;background:#d8d8d8"></div>
<div class="a" style="left:1124px;top:989px;width:2px;height:26px;background:#e0e020"></div>
<svg class="a" style="left:0px;top:0px;" width="1920" height="1040" viewBox="0 0 1920 1040"><rect x="493.1" y="989" width="1.5" height="3" fill="#8a8a8a"/><rect x="505.8" y="989" width="1.5" height="5" fill="#8a8a8a"/><rect x="518.6" y="989" width="1.5" height="3" fill="#8a8a8a"/><rect x="531.3" y="989" width="1.5" height="5" fill="#8a8a8a"/><rect x="544.0" y="989" width="1.5" height="3" fill="#8a8a8a"/><rect x="556.8" y="989" width="1.5" height="5" fill="#8a8a8a"/><rect x="569.5" y="989" width="1.5" height="3" fill="#8a8a8a"/><rect x="582.2" y="989" width="1.5" height="5" fill="#8a8a8a"/><rect x="595.0" y="989" width="1.5" height="3" fill="#8a8a8a"/><rect x="607.7" y="989" width="1.5" height="5" fill="#8a8a8a"/><rect x="620.5" y="989" width="1.5" height="3" fill="#8a8a8a"/><rect x="633.2" y="989" width="1.5" height="5" fill="#8a8a8a"/><rect x="645.9" y="989" width="1.5" height="3" fill="#8a8a8a"/><rect x="658.7" y="989" width="1.5" height="5" fill="#8a8a8a"/><rect x="671.4" y="989" width="1.5" height="3" fill="#8a8a8a"/><rect x="684.2" y="989" width="1.5" height="5" fill="#8a8a8a"/><rect x="696.9" y="989" width="1.5" height="3" fill="#8a8a8a"/><rect x="709.6" y="989" width="1.5" height="5" fill="#8a8a8a"/><rect x="722.4" y="989" width="1.5" height="3" fill="#8a8a8a"/><rect x="735.1" y="989" width="1.5" height="5" fill="#8a8a8a"/><rect x="747.9" y="989" width="1.5" height="3" fill="#8a8a8a"/><rect x="760.6" y="989" width="1.5" height="5" fill="#8a8a8a"/><rect x="773.4" y="989" width="1.5" height="3" fill="#8a8a8a"/><rect x="786.1" y="989" width="1.5" height="5" fill="#8a8a8a"/><rect x="798.8" y="989" width="1.5" height="3" fill="#8a8a8a"/><rect x="811.6" y="989" width="1.5" height="5" fill="#8a8a8a"/><rect x="824.3" y="989" width="1.5" height="3" fill="#8a8a8a"/><rect x="837.1" y="989" width="1.5" height="5" fill="#8a8a8a"/><rect x="849.8" y="989" width="1.5" height="3" fill="#8a8a8a"/><rect x="862.5" y="989" width="1.5" height="5" fill="#8a8a8a"/><rect x="875.3" y="989" width="1.5" height="3" fill="#8a8a8a"/><rect x="888.0" y="989" width="1.5" height="5" fill="#8a8a8a"/><rect x="900.8" y="989" width="1.5" height="3" fill="#8a8a8a"/><rect x="913.5" y="989" width="1.5" height="5" fill="#8a8a8a"/><rect x="926.2" y="989" width="1.5" height="3" fill="#8a8a8a"/><rect x="939.0" y="989" width="1.5" height="5" fill="#8a8a8a"/><rect x="951.7" y="989" width="1.5" height="3" fill="#8a8a8a"/><rect x="964.5" y="989" width="1.5" height="5" fill="#8a8a8a"/><rect x="977.2" y="989" width="1.5" height="3" fill="#8a8a8a"/><rect x="989.9" y="989" width="1.5" height="5" fill="#8a8a8a"/><rect x="1002.7" y="989" width="1.5" height="3" fill="#8a8a8a"/><rect x="1015.4" y="989" width="1.5" height="5" fill="#8a8a8a"/><rect x="1028.2" y="989" width="1.5" height="3" fill="#8a8a8a"/><rect x="1040.9" y="989" width="1.5" height="5" fill="#8a8a8a"/><rect x="1053.6" y="989" width="1.5" height="3" fill="#8a8a8a"/><rect x="1066.4" y="989" width="1.5" height="5" fill="#8a8a8a"/><rect x="1079.1" y="989" width="1.5" height="3" fill="#8a8a8a"/><rect x="1091.9" y="989" width="1.5" height="5" fill="#8a8a8a"/><rect x="1104.6" y="989" width="1.5" height="3" fill="#8a8a8a"/><rect x="1117.3" y="989" width="1.5" height="5" fill="#8a8a8a"/><rect x="1130.1" y="989" width="1.5" height="3" fill="#8a8a8a"/><rect x="1142.8" y="989" width="1.5" height="5" fill="#8a8a8a"/><rect x="1155.5" y="989" width="1.5" height="3" fill="#8a8a8a"/><rect x="1168.3" y="989" width="1.5" height="5" fill="#8a8a8a"/><rect x="1181.0" y="989" width="1.5" height="3" fill="#8a8a8a"/><rect x="1193.8" y="989" width="1.5" height="5" fill="#8a8a8a"/><rect x="1206.5" y="989" width="1.5" height="3" fill="#8a8a8a"/><rect x="1219.2" y="989" width="1.5" height="5" fill="#8a8a8a"/><rect x="1232.0" y="989" width="1.5" height="3" fill="#8a8a8a"/><rect x="1244.7" y="989" width="1.5" height="5" fill="#8a8a8a"/><rect x="1257.5" y="989" width="1.5" height="3" fill="#8a8a8a"/><rect x="1270.2" y="989" width="1.5" height="5" fill="#8a8a8a"/><rect x="1283.0" y="989" width="1.5" height="3" fill="#8a8a8a"/><rect x="1295.7" y="989" width="1.5" height="5" fill="#8a8a8a"/><rect x="1308.4" y="989" width="1.5" height="3" fill="#8a8a8a"/><rect x="1321.2" y="989" width="1.5" height="5" fill="#8a8a8a"/><rect x="1333.9" y="989" width="1.5" height="3" fill="#8a8a8a"/><rect x="1346.7" y="989" width="1.5" height="5" fill="#8a8a8a"/><rect x="1359.4" y="989" width="1.5" height="3" fill="#8a8a8a"/><rect x="1372.1" y="989" width="1.5" height="5" fill="#8a8a8a"/><rect x="1384.9" y="989" width="1.5" height="3" fill="#8a8a8a"/><rect x="1397.6" y="989" width="1.5" height="5" fill="#8a8a8a"/><rect x="1410.4" y="989" width="1.5" height="3" fill="#8a8a8a"/><rect x="1423.1" y="989" width="1.5" height="5" fill="#8a8a8a"/><rect x="1435.8" y="989" width="1.5" height="3" fill="#8a8a8a"/><rect x="1448.6" y="989" width="1.5" height="5" fill="#8a8a8a"/><rect x="1461.3" y="989" width="1.5" height="3" fill="#8a8a8a"/><rect x="1474.1" y="989" width="1.5" height="5" fill="#8a8a8a"/><rect x="1486.8" y="989" width="1.5" height="3" fill="#8a8a8a"/><rect x="1499.5" y="989" width="1.5" height="5" fill="#8a8a8a"/><rect x="1512.3" y="989" width="1.5" height="3" fill="#8a8a8a"/><rect x="1525.0" y="989" width="1.5" height="5" fill="#8a8a8a"/><rect x="1537.8" y="989" width="1.5" height="3" fill="#8a8a8a"/><rect x="1550.5" y="989" width="1.5" height="5" fill="#8a8a8a"/><rect x="1563.2" y="989" width="1.5" height="3" fill="#8a8a8a"/><rect x="1576.0" y="989" width="1.5" height="5" fill="#8a8a8a"/><rect x="1588.7" y="989" width="1.5" height="3" fill="#8a8a8a"/><rect x="1601.5" y="989" width="1.5" height="5" fill="#8a8a8a"/><rect x="1614.2" y="989" width="1.5" height="3" fill="#8a8a8a"/><rect x="1626.9" y="989" width="1.5" height="5" fill="#8a8a8a"/><rect x="1639.7" y="989" width="1.5" height="3" fill="#8a8a8a"/><rect x="1652.4" y="989" width="1.5" height="5" fill="#8a8a8a"/><rect x="1665.1" y="989" width="1.5" height="3" fill="#8a8a8a"/><rect x="1677.9" y="989" width="1.5" height="5" fill="#8a8a8a"/><rect x="1690.6" y="989" width="1.5" height="3" fill="#8a8a8a"/><rect x="1703.4" y="989" width="1.5" height="5" fill="#8a8a8a"/><rect x="1716.1" y="989" width="1.5" height="3" fill="#8a8a8a"/><rect x="1728.8" y="989" width="1.5" height="5" fill="#8a8a8a"/><rect x="1741.6" y="989" width="1.5" height="3" fill="#8a8a8a"/><rect x="1754.3" y="989" width="1.5" height="5" fill="#8a8a8a"/></svg>
<div class="t" style="left:543.0px;top:999px;width:80px;text-align:center;font-size:13.2px;color:#b4b4b4;transform:scaleX(.92)">14.120</div>
<div class="t" style="left:670.4px;top:999px;width:80px;text-align:center;font-size:13.2px;color:#b4b4b4;transform:scaleX(.92)">14.140</div>
<div class="t" style="left:797.8px;top:999px;width:80px;text-align:center;font-size:13.2px;color:#b4b4b4;transform:scaleX(.92)">14.160</div>
<div class="t" style="left:925.2px;top:999px;width:80px;text-align:center;font-size:13.2px;color:#b4b4b4;transform:scaleX(.92)">14.180</div>
<div class="t" style="left:1052.6px;top:999px;width:80px;text-align:center;font-size:13.2px;color:#b4b4b4;transform:scaleX(.92)">14.200</div>
<div class="t" style="left:1180.0px;top:999px;width:80px;text-align:center;font-size:13.2px;color:#b4b4b4;transform:scaleX(.92)">14.220</div>
<div class="t" style="left:1307.4px;top:999px;width:80px;text-align:center;font-size:13.2px;color:#b4b4b4;transform:scaleX(.92)">14.240</div>
<div class="t" style="left:1434.8000000000002px;top:999px;width:80px;text-align:center;font-size:13.2px;color:#b4b4b4;transform:scaleX(.92)">14.260</div>
<div class="t" style="left:1562.2px;top:999px;width:80px;text-align:center;font-size:13.2px;color:#b4b4b4;transform:scaleX(.92)">14.280</div>
<div class="t" style="left:1689.6000000000001px;top:999px;width:80px;text-align:center;font-size:13.2px;color:#b4b4b4;transform:scaleX(.92)">14.300</div>
<div class="a" style="left:463px;top:990px;width:24px;height:24px;background:#f8f8f8;border:1px solid #dadada;border-radius:3px"></div>
<svg class="a" style="left:463px;top:990px;" width="24" height="24" viewBox="0 0 24 24"><circle cx="12" cy="12" r="7.5" fill="none" stroke="#333" stroke-width="1.6"/><path d="M8 12l4-3v6zM11.5 12l4-3v6z" fill="#222"/></svg>
<div class="a" style="left:1763px;top:990px;width:36px;height:24px;background:#fbfbfb;border:1px solid #dedede;border-radius:3px"></div>
<svg class="a" style="left:1763px;top:990px;" width="36" height="24" viewBox="0 0 36 24"><rect x="10" y="9" width="15.5" height="9" fill="none" stroke="#333" stroke-width="1"/><path d="M12 11h12M12 13h12M12 15h12" stroke="#555" stroke-width=".9" stroke-dasharray="1.2 .6"/><path d="M14 17h8" stroke="#333"/><path d="M18 9l1-3l3-1" fill="none" stroke="#333" stroke-width=".8"/></svg>
<div class="a" style="left:1803px;top:990px;width:48px;height:24px;background:#fbfbfb;border:1px solid #dedede;border-radius:3px"></div>
<div class="t" style="left:1811px;top:997px;font-size:12.5px;color:#111">x2</div>
<svg class="a" style="left:1839px;top:996px;" width="8" height="10" viewBox="0 0 8 10"><path d="M1 1l5 4l-5 4z" fill="#111"/></svg>
<div class="a" style="left:1854px;top:990px;width:24px;height:24px;background:#fbfbfb;border:1px solid #dedede;border-radius:3px"></div>
<svg class="a" style="left:1854px;top:990px;" width="24" height="24" viewBox="0 0 24 24"><circle cx="12" cy="12" r="7.5" fill="none" stroke="#333" stroke-width="1.6"/><path d="M8.5 9v6l4-3zM12 9v6l4-3z" fill="#222"/></svg>
<div class="a" style="left:1880px;top:137px;width:1px;height:880px;background:#a8a8a8"></div>
<div class="a" style="left:1881px;top:138px;width:37px;height:877px;background:#000"></div>
<div class="a" style="left:1918px;top:137px;width:2px;height:880px;background:#f0f0f0"></div>
<div class="a" style="left:1881px;top:138px;width:37px;height:29px;background:linear-gradient(#404040 0%,#3a3a3a 48%,#000 50%,#000 100%);border-bottom:1px solid #7a7a7a"></div>
<div class="t" style="left:1879.5px;top:147.5px;width:40px;text-align:center;font-size:12px;color:#f0f0f0;transform:scaleX(.9)">Auto</div>
<div class="a" style="left:1882.5px;top:369px;width:34.5px;height:237px;background:linear-gradient(#f0106a 0%,#ff0010 6%,#ff0000 14%,#ff5000 27%,#ff9000 36%,#ffff00 41%,#b0ff00 47%,#00ff00 53%,#00ff80 62%,#00ffff 69%,#0080ff 77%,#0000ff 84%,#000090 93%,#000020 100%)"></div>
<div class="a" style="left:1882px;top:606px;width:35px;height:1.5px;background:#f4f4f4"></div>
<div class="t" style="left:1880.5px;top:215.0px;width:40px;text-align:center;font-size:10px;color:#b8b8b8;transform:scaleX(.88)">-10</div>
<div class="t" style="left:1880.5px;top:268.05px;width:40px;text-align:center;font-size:10px;color:#b8b8b8;transform:scaleX(.88)">-20</div>
<div class="t" style="left:1880.5px;top:321.1px;width:40px;text-align:center;font-size:10px;color:#b8b8b8;transform:scaleX(.88)">-30</div>
<div class="a" style="left:1887px;top:369.6px;width:28px;height:19px;border-radius:4px;background:#7a0030"></div>
<div class="t" style="left:1880.5px;top:374.15px;width:40px;text-align:center;font-size:10px;color:#b8b8b8;transform:scaleX(.88)">-40</div>
<div class="a" style="left:1887px;top:422.7px;width:28px;height:19px;border-radius:4px;background:#6a2a00"></div>
<div class="t" style="left:1880.5px;top:427.2px;width:40px;text-align:center;font-size:10px;color:#b8b8b8;transform:scaleX(.88)">-50</div>
<div class="a" style="left:1887px;top:475.8px;width:28px;height:19px;border-radius:4px;background:#2a6a10"></div>
<div class="t" style="left:1880.5px;top:480.25px;width:40px;text-align:center;font-size:10px;color:#b8b8b8;transform:scaleX(.88)">-60</div>
<div class="a" style="left:1887px;top:528.8px;width:28px;height:19px;border-radius:4px;background:#0a5a78"></div>
<div class="t" style="left:1880.5px;top:533.3px;width:40px;text-align:center;font-size:10px;color:#b8b8b8;transform:scaleX(.88)">-70</div>
<div class="a" style="left:1887px;top:581.8px;width:28px;height:19px;border-radius:4px;background:#0a0a40"></div>
<div class="t" style="left:1880.5px;top:586.3499999999999px;width:40px;text-align:center;font-size:10px;color:#b8b8b8;transform:scaleX(.88)">-80</div>
<div class="t" style="left:1880.5px;top:639.4px;width:40px;text-align:center;font-size:10px;color:#b8b8b8;transform:scaleX(.88)">-90</div>
<div class="t" style="left:1880.5px;top:692.45px;width:40px;text-align:center;font-size:10px;color:#b8b8b8;transform:scaleX(.88)">-100</div>
<div class="t" style="left:1880.5px;top:745.5px;width:40px;text-align:center;font-size:10px;color:#b8b8b8;transform:scaleX(.88)">-110</div>
<div class="t" style="left:1880.5px;top:798.55px;width:40px;text-align:center;font-size:10px;color:#b8b8b8;transform:scaleX(.88)">-120</div>
<div class="t" style="left:1880.5px;top:851.5999999999999px;width:40px;text-align:center;font-size:10px;color:#b8b8b8;transform:scaleX(.88)">-130</div>
<div class="t" style="left:1880.5px;top:904.65px;width:40px;text-align:center;font-size:10px;color:#b8b8b8;transform:scaleX(.88)">-140</div>
<div class="t" style="left:1880.5px;top:957.6999999999999px;width:40px;text-align:center;font-size:10px;color:#b8b8b8;transform:scaleX(.88)">-150</div>
</body></html>
